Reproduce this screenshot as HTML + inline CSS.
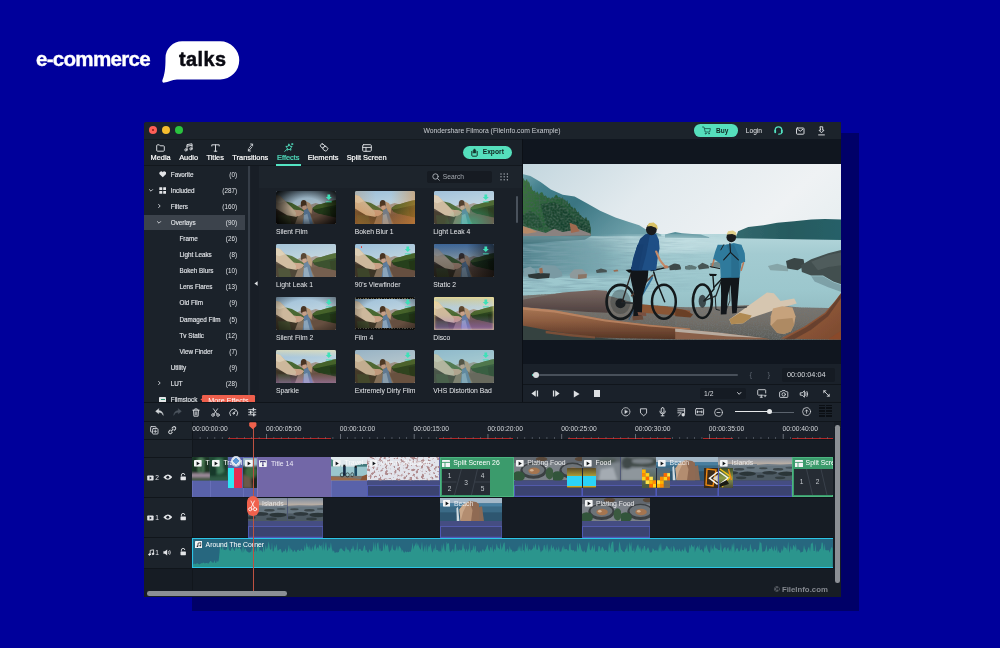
<!DOCTYPE html>
<html lang="en">
<head>
<meta charset="utf-8">
<title>e-commerce talks – Wondershare Filmora</title>
<style>
*{box-sizing:border-box;margin:0;padding:0}
html,body{width:1000px;height:648px;overflow:hidden}
body{background:#00009b;font-family:"Liberation Sans",sans-serif;position:relative;color:#e8eaed}
.abs,#w div,#w svg,#w span{position:absolute}
#logo-e{left:35.5px;top:47px;font-weight:bold;font-size:20.6px;letter-spacing:-0.75px;color:#fff;line-height:24px;white-space:nowrap;-webkit-text-stroke:0.35px #fff;will-change:transform}
#bubble{left:160px;top:36px;width:85px;height:52px}
#talks{left:178.8px;top:47px;font-weight:bold;font-size:19.8px;letter-spacing:0.5px;color:#0a0a12;line-height:24px;white-space:nowrap;-webkit-text-stroke:0.5px #0a0a12;will-change:transform}
#shadow{left:192px;top:133px;width:666.7px;height:477.6px;background:#000068}
#win{will-change:transform;left:144px;top:122px;width:697px;height:474.5px;background:#1a2028;overflow:hidden;border-radius:2.5px 1px 0 0}
#w{position:absolute;left:-144px;top:-122px;width:1000px;height:648px}
#w div,#w span{white-space:nowrap}
.tl{width:8px;height:8px;border-radius:50%;top:126.3px}
.tab{font-size:7.4px;color:#fff;text-align:center;transform:translateX(-50%);top:152.5px;line-height:10px;-webkit-text-stroke:0.2px #fff}
.tab.on{color:#53e3c2;-webkit-text-stroke:0.2px #53e3c2}
.ico{stroke:#d5d8dc;fill:none;stroke-width:1;stroke-linecap:round;stroke-linejoin:round;overflow:visible}
.sb{font-size:6.3px;color:#dfe2e6;line-height:10px;-webkit-text-stroke:0.15px #dfe2e6}
.sbc{font-size:6.3px;color:#dfe2e6;line-height:10px;text-align:right;width:30px;left:207px}
.lab{font-size:6.8px;color:#e6e8eb;line-height:10px}
.th{width:60px;height:32px;border-radius:1.5px;overflow:hidden;background:#555}
.tc{font-size:6.73px;color:#d4d7db;line-height:10px}
.clipt{font-size:6.85px;color:#fff;line-height:10px}
</style>
</head>
<body>
<div id="logo-e" class="abs">e-commerce</div>
<svg id="bubble" class="abs" viewBox="0 0 85 52"><path d="M22.1 5.3H60.2A19.05 19.05 0 0 1 60.2 43.4H17C12 43.4 8 46 4.5 46.6C2.5 46.9 1.8 45.5 2.6 43.5C4.5 39 5.5 33 5.5 22A16.6 16.6 0 0 1 22.1 5.3Z" fill="#fff"/></svg>
<div id="talks" class="abs">talks</div>
<div id="shadow" class="abs"></div>
<div id="win" class="abs"><div id="w">
<!-- TITLE BAR -->
<div style="left:144px;top:122px;width:698px;height:17px;background:#1c232b"></div>
<div class="tl" style="left:149px;background:#fe5f57"></div>
<div class="tl" style="left:162px;background:#f5bd2f"></div>
<div class="tl" style="left:175px;background:#2ac33f"></div>
<div style="left:151.8px;top:129.1px;width:2.4px;height:2.4px;border-radius:50%;background:#8c1a12"></div>
<div id="title" style="left:392px;width:200px;top:125.6px;line-height:10px;text-align:center;font-size:6.8px;color:#c9cdd2">Wondershare Filmora (FileInfo.com Example)</div>
<div style="left:694px;top:124.2px;width:44px;height:12.6px;border-radius:6.3px;background:#55dfbc"></div>
<svg class="ico" style="left:702px;top:126px;width:9px;height:9px;stroke:#1d5f52;stroke-width:0.9" viewBox="0 0 9 9"><path d="M0.5 1H2L3.2 6H7.6L8.4 2.6H2.5"/><circle cx="3.7" cy="7.6" r="0.5"/><circle cx="7" cy="7.6" r="0.5"/></svg>
<div style="left:716px;top:125.7px;font-size:6.5px;font-weight:bold;color:#10241f;line-height:10px">Buy</div>
<div style="left:745.7px;top:125.7px;font-size:6.7px;color:#e6e8eb;line-height:10px">Login</div>
<svg class="ico" style="left:774px;top:126px;width:9px;height:9px;stroke:#53e3c2;stroke-width:1.2" viewBox="0 0 9 9"><path d="M1.2 5V4.2A3.3 3.3 0 0 1 7.8 4.2V5"/><path d="M1.2 4.5V6.3M7.8 4.5V6.3" stroke-width="1.8"/><path d="M7.8 6.5C7.5 8 6 8.2 4.8 8.2"/></svg>
<svg class="ico" style="left:795.5px;top:126.5px;width:8.5px;height:8px" viewBox="0 0 8.5 8"><rect x="0.5" y="1" width="7.5" height="6.2" rx="0.8"/><path d="M1.8 2.4L4.25 4.2L6.7 2.4"/></svg>
<svg class="ico" style="left:817.5px;top:125.5px;width:7px;height:10px" viewBox="0 0 7 10"><path d="M2.3 0.8H4.7V4.2H6L3.5 6.8L1 4.2H2.3Z"/><path d="M0.6 8.9H6.4"/></svg>

<!-- TOOLBAR -->
<div style="left:144px;top:139px;width:378px;height:26.5px;background:#1a2129;border-top:1px solid #141a20;border-bottom:1px solid #12171d"></div>
<svg class="ico" style="left:156px;top:143.5px;width:9px;height:8px" viewBox="0 0 9 8"><path d="M0.7 1.6Q0.7 0.8 1.5 0.8H3.3L4.2 1.8H7.5Q8.3 1.8 8.3 2.6V6.4Q8.3 7.2 7.5 7.2H1.5Q0.7 7.2 0.7 6.4Z"/></svg>
<svg class="ico" style="left:184px;top:143px;width:9px;height:9px" viewBox="0 0 9 9"><path d="M3 6.8V1.6L8 0.8V5.8M3 3.2L8 2.4"/><circle cx="1.9" cy="6.9" r="1.1"/><circle cx="6.9" cy="5.9" r="1.1"/></svg>
<svg class="ico" style="left:210.5px;top:143.5px;width:9px;height:8px" viewBox="0 0 9 8"><path d="M0.8 2V0.8H8.2V2M4.5 0.8V7.2M3.2 7.2H5.8"/></svg>
<svg class="ico" style="left:245.8px;top:143px;width:9px;height:9px;stroke-width:0.9" viewBox="0 0 9 9"><path d="M3.4 4.6L6.4 1.2M4.6 1H6.6V3M5.6 4.4L2.6 7.8M4.4 8H2.4V6"/></svg>
<svg class="ico" style="left:283.5px;top:143px;width:10px;height:9px;stroke:#53e3c2;stroke-width:0.9" viewBox="0 0 10 9"><path d="M5 1.2L6 3.2L8.2 3.5L6.6 5L7 7.2L5 6.2L3 7.2L3.4 5L1.8 3.5L4 3.2Z"/><path d="M2.6 6.6L0.8 8.4M8.2 0.6V1.6M9 1.1H7.6"/></svg>
<svg class="ico" style="left:318.5px;top:143px;width:10px;height:9px;stroke-width:0.9" viewBox="0 0 10 9"><rect x="1.4" y="1.2" width="4.2" height="3.4" rx="1.2" transform="rotate(35 3.5 2.9)"/><rect x="4" y="3.6" width="4.6" height="4" rx="1.2" transform="rotate(35 6.3 5.6)"/></svg>
<svg class="ico" style="left:361.5px;top:143.5px;width:10px;height:8px" viewBox="0 0 10 8"><rect x="0.7" y="0.7" width="8.6" height="6.6" rx="0.9"/><path d="M0.7 3.4H9.3M4 3.4V7.3"/></svg>
<div class="tab" style="left:160.6px">Media</div>
<div class="tab" style="left:188.6px">Audio</div>
<div class="tab" style="left:215.2px">Titles</div>
<div class="tab" style="left:250.3px">Transitions</div>
<div class="tab on" style="left:288.3px">Effects</div>
<div class="tab" style="left:323.1px">Elements</div>
<div class="tab" style="left:366.6px">Split Screen</div>
<div style="left:276px;top:163.7px;width:25px;height:2.2px;background:#53e3c2"></div>
<div style="left:462.8px;top:145.5px;width:49.4px;height:13.4px;border-radius:6.7px;background:#55dfbc"></div>
<svg class="ico" style="left:470.5px;top:147.5px;width:7px;height:9px;stroke:#16332c;stroke-width:1" viewBox="0 0 7 9"><path d="M0.8 3.4V7.4Q0.8 8.2 1.6 8.2H5.4Q6.2 8.2 6.2 7.4V3.4"/><path d="M2.2 3.2V2.2L3.5 0.8L4.8 2.2V3.2V5H2.2Z" fill="#16332c" stroke-width="0.5"/></svg>
<div style="left:482.7px;top:147.3px;font-size:6.7px;font-weight:bold;color:#10241f;line-height:10px">Export</div>

<!-- SIDEBAR -->
<div style="left:144px;top:165.5px;width:104px;height:236px;background:#1b222a"></div>
<div style="left:144px;top:214.6px;width:101.3px;height:15.9px;background:#3c434c"></div>
<div style="left:247.6px;top:165.5px;width:2.9px;height:236px;background:#363e48"></div>
<div style="left:250.5px;top:165.5px;width:8px;height:236px;background:#181e26"></div>
<svg style="left:253.5px;top:281px;width:4px;height:5px" viewBox="0 0 4 5"><path d="M3.6 0.3V4.7L0.4 2.5Z" fill="#e0e2e5"/></svg>
<svg style="left:158.5px;top:171px;width:7.5px;height:6.5px" viewBox="0 0 7.5 6.5"><path d="M3.75 6.2L0.6 3.2A1.75 1.75 0 0 1 3.75 1.3A1.75 1.75 0 0 1 6.9 3.2Z" fill="#e3e5e8"/></svg>
<svg style="left:158.5px;top:186.8px;width:7.5px;height:7px" viewBox="0 0 7.5 7"><g fill="#e3e5e8"><rect x="0.3" y="0.2" width="3" height="2.9" rx="0.4"/><rect x="4.2" y="0.2" width="3" height="2.9" rx="0.4"/><rect x="0.3" y="3.9" width="3" height="2.9" rx="0.4"/><rect x="4.2" y="3.9" width="3" height="2.9" rx="0.4"/></g></svg>
<svg class="ico" style="left:148.5px;top:188.6px;width:4px;height:3px;stroke-width:0.9" viewBox="0 0 4 3"><path d="M0.4 0.6L2 2.2L3.6 0.6"/></svg>
<svg class="ico" style="left:157.8px;top:204.4px;width:3px;height:4px;stroke-width:0.9" viewBox="0 0 3 4"><path d="M0.6 0.4L2.2 2L0.6 3.6"/></svg>
<svg class="ico" style="left:157.2px;top:220.9px;width:4px;height:3px;stroke-width:0.9" viewBox="0 0 4 3"><path d="M0.4 0.6L2 2.2L3.6 0.6"/></svg>
<svg class="ico" style="left:157.8px;top:381.4px;width:3px;height:4px;stroke-width:0.9" viewBox="0 0 3 4"><path d="M0.6 0.4L2.2 2L0.6 3.6"/></svg>
<div class="sb" style="left:170.8px;top:169.6px">Favorite</div><div class="sbc" style="top:169.6px">(0)</div>
<div class="sb" style="left:170.8px;top:185.7px">Included</div><div class="sbc" style="top:185.7px">(287)</div>
<div class="sb" style="left:170.8px;top:201.8px">Filters</div><div class="sbc" style="top:201.8px">(160)</div>
<div class="sb" style="left:170.8px;top:217.9px">Overlays</div><div class="sbc" style="top:217.9px">(90)</div>
<div class="sb" style="left:179.5px;top:234px">Frame</div><div class="sbc" style="top:234px">(26)</div>
<div class="sb" style="left:179.5px;top:250.1px">Light Leaks</div><div class="sbc" style="top:250.1px">(8)</div>
<div class="sb" style="left:179.5px;top:266.2px">Bokeh Blurs</div><div class="sbc" style="top:266.2px">(10)</div>
<div class="sb" style="left:179.5px;top:282.3px">Lens Flares</div><div class="sbc" style="top:282.3px">(13)</div>
<div class="sb" style="left:179.5px;top:298.4px">Old Film</div><div class="sbc" style="top:298.4px">(9)</div>
<div class="sb" style="left:179.5px;top:314.5px">Damaged Film</div><div class="sbc" style="top:314.5px">(5)</div>
<div class="sb" style="left:179.5px;top:330.6px">Tv Static</div><div class="sbc" style="top:330.6px">(12)</div>
<div class="sb" style="left:179.5px;top:346.7px">View Finder</div><div class="sbc" style="top:346.7px">(7)</div>
<div class="sb" style="left:170.8px;top:362.8px">Utility</div><div class="sbc" style="top:362.8px">(9)</div>
<div class="sb" style="left:170.8px;top:378.9px">LUT</div><div class="sbc" style="top:378.9px">(28)</div>
<div style="left:159px;top:396.5px;width:6.5px;height:6px;background:#e3e5e8;border-radius:0.8px"></div>
<div style="left:160.5px;top:399px;width:4px;height:1.4px;background:#2e9a74"></div>
<div class="sb" style="left:170.8px;top:395px">Filmstock</div>
<svg style="left:199.5px;top:397px;width:4px;height:5px" viewBox="0 0 4 5"><path d="M4 0V5L0.3 2.5Z" fill="#ee5f4c"/></svg>
<div style="left:202.3px;top:395px;width:52.3px;height:10px;background:#ee5f4c;border-radius:1.2px"></div>
<div style="left:202.3px;top:396.4px;width:52.3px;text-align:center;font-size:7.2px;color:#fff;line-height:10px">More Effects</div>

<!-- EFFECTS GRID PANEL -->
<div style="left:258.5px;top:165.5px;width:263.5px;height:22px;background:#1d242c"></div>
<div style="left:258.5px;top:187.5px;width:263.5px;height:214px;background:#1a2028"></div>
<div style="left:426.8px;top:170.6px;width:65px;height:12.6px;border-radius:2px;background:#161b22"></div>
<svg class="ico" style="left:431.5px;top:173.4px;width:8px;height:8px;stroke:#aeb3ba;stroke-width:0.9" viewBox="0 0 8 8"><circle cx="3.5" cy="3.5" r="2.7"/><path d="M5.5 5.5L7.3 7.3"/></svg>
<div style="left:442.8px;top:172px;font-size:6.7px;color:#a4a9b0;line-height:10px">Search</div>
<svg style="left:500px;top:173px;width:8.4px;height:7.6px" viewBox="0 0 8.4 7.6"><g fill="#9ea3aa"><circle cx="1" cy="0.9" r="0.75"/><circle cx="4.2" cy="0.9" r="0.75"/><circle cx="7.4" cy="0.9" r="0.75"/><circle cx="1" cy="3.8" r="0.75"/><circle cx="4.2" cy="3.8" r="0.75"/><circle cx="7.4" cy="3.8" r="0.75"/><circle cx="1" cy="6.7" r="0.75"/><circle cx="4.2" cy="6.7" r="0.75"/><circle cx="7.4" cy="6.7" r="0.75"/></g></svg>
<div style="left:516px;top:196px;width:2px;height:27px;border-radius:1px;background:#4a525c"></div>

<!-- PREVIEW PANEL -->
<div style="left:521.8px;top:139px;width:320px;height:225px;background:#10161f"></div>
<div style="left:521.8px;top:139px;width:1px;height:263px;background:#0c1016"></div>
<div style="left:522.8px;top:363.8px;width:319px;height:20.6px;background:#1a212a"></div>
<div style="left:522.8px;top:384.4px;width:319px;height:17px;background:#1a212a;border-top:1px solid #10151b"></div>
<div style="left:532px;top:374.3px;width:206px;height:1.6px;border-radius:1px;background:#48505a"></div>
<div style="left:531.5px;top:374.1px;width:4px;height:2px;background:#53e3c2;border-radius:1px"></div>
<div style="left:533px;top:372.1px;width:6px;height:6px;border-radius:50%;background:#d8dbde"></div>
<div style="left:749.5px;top:369.6px;font-size:8px;color:#59616b;line-height:10px">{</div>
<div style="left:767.5px;top:369.6px;font-size:8px;color:#59616b;line-height:10px">}</div>
<div style="left:782px;top:368px;width:53px;height:14px;border-radius:2px;background:#151b23"></div>
<div style="left:787px;top:370.2px;font-size:7.3px;color:#d7dade;line-height:10px">00:00:04:04</div>
<svg style="left:530.5px;top:390px;width:8px;height:7px" viewBox="0 0 8 7"><path d="M4.8 0.3V6.7L0.4 3.5Z" fill="#dcdfe2"/><rect x="5.8" y="0.5" width="1.3" height="6" fill="#dcdfe2"/></svg>
<svg style="left:551.5px;top:390px;width:8px;height:7px" viewBox="0 0 8 7"><path d="M3.2 0.3V6.7L7.6 3.5Z" fill="#dcdfe2"/><rect x="0.9" y="0.5" width="1.3" height="6" fill="#dcdfe2"/></svg>
<svg style="left:573px;top:389.6px;width:7px;height:8px" viewBox="0 0 7 8"><path d="M0.8 0.4V7.6L6.6 4Z" fill="#dcdfe2"/></svg>
<div style="left:593.8px;top:390.4px;width:6.2px;height:6.2px;background:#dcdfe2"></div>
<div style="left:700px;top:388.4px;width:46px;height:10.4px;border-radius:2px;background:#151b23"></div>
<div style="left:704px;top:388.6px;font-size:6.8px;color:#d7dade;line-height:10px">1/2</div>
<svg class="ico" style="left:737.3px;top:392px;width:4.4px;height:3px;stroke-width:0.9" viewBox="0 0 4.4 3"><path d="M0.5 0.5L2.2 2.3L3.9 0.5"/></svg>
<svg class="ico" style="left:756.5px;top:389.3px;width:10px;height:9px;stroke-width:0.9" viewBox="0 0 10 9"><path d="M6 6.2H1.4Q0.7 6.2 0.7 5.5V1.4Q0.7 0.7 1.4 0.7H8Q8.7 0.7 8.7 1.4V4"/><path d="M3.2 8.2H5.4M4.3 6.2V8.2"/><path d="M7 6.2H9.4L8.2 7.8Z" fill="#d5d8dc" stroke-width="0.4"/></svg>
<svg class="ico" style="left:779px;top:389.6px;width:9.4px;height:8px;stroke-width:0.9" viewBox="0 0 9.4 8"><path d="M0.6 2.4Q0.6 1.7 1.3 1.7H2.6L3.3 0.6H6.1L6.8 1.7H8.1Q8.8 1.7 8.8 2.4V6.7Q8.8 7.4 8.1 7.4H1.3Q0.6 7.4 0.6 6.7Z"/><circle cx="4.7" cy="4.4" r="1.7"/></svg>
<svg class="ico" style="left:799.5px;top:389.6px;width:9px;height:8px;stroke-width:0.9" viewBox="0 0 9 8"><path d="M0.6 2.8H2.2L4.4 0.8V7.2L2.2 5.2H0.6Z"/><path d="M5.8 2.6Q6.6 4 5.8 5.4M7 1.5Q8.6 4 7 6.5"/></svg>
<svg class="ico" style="left:822.5px;top:390.3px;width:7px;height:7px;stroke-width:0.9" viewBox="0 0 7 7"><path d="M0.8 0.8L6.2 6.2M0.8 2.8V0.8H2.8M6.2 4.2V6.2H4.2"/></svg>
<!-- EFFECT THUMBNAILS -->
<svg style="left:0;top:0;width:0;height:0" aria-hidden="true"><defs>
<filter id="tb" x="-5%" y="-5%" width="110%" height="110%"><feGaussianBlur stdDeviation="9"/></filter>
<linearGradient id="tsky" x1="0" y1="0" x2="0.3" y2="1"><stop offset="0" stop-color="#98bcd8"/><stop offset="0.45" stop-color="#b4cede"/><stop offset="1" stop-color="#dde4e6"/></linearGradient>
<linearGradient id="tgr" x1="0" y1="0" x2="1" y2="0"><stop offset="0" stop-color="#4c4034"/><stop offset="0.45" stop-color="#786252"/><stop offset="0.7" stop-color="#685044"/><stop offset="1" stop-color="#4a3a30"/></linearGradient>
<symbol id="vine" viewBox="72 55 858 470" preserveAspectRatio="none">
<rect x="40" y="30" width="920" height="520" fill="url(#tsky)"/>
<g filter="url(#tb)">
<rect x="40" y="300" width="920" height="260" fill="url(#tgr)"/>
<polygon points="380,270 470,235 560,250 640,225 720,250 720,300 380,300" fill="#a39890"/>
<polygon points="150,200 230,210 300,225 400,285 470,330 470,400 300,380 150,300" fill="#4a6830"/>
<polygon points="40,330 250,380 460,400 420,560 40,560" fill="#3e3628"/>
<polygon points="100,400 260,400 300,560 120,560" fill="#3f4a2a" opacity="0.8"/>
<polygon points="590,300 650,255 720,240 800,215 880,195 960,180 960,440 860,425 760,400 680,380 620,350" fill="#263f1c"/>
<polygon points="590,300 650,255 720,240 800,215 880,195 960,180 960,250 860,270 760,290 680,310 620,320" fill="#5a7a34" opacity="0.6"/>
<polygon points="840,300 960,280 960,440 860,425" fill="#1f3418" opacity="0.8"/>
<polygon points="570,390 700,385 960,440 960,560 640,560" fill="#66503f"/>
<polygon points="390,400 470,380 560,400 640,560 330,560" fill="#84705c"/>
</g>
<g filter="url(#tb)">
<polygon points="40,100 72,112 130,128 250,245 330,322 430,335 475,360 430,398 350,422 230,402 72,305 40,290" fill="#cdb89c"/>
<polygon points="40,100 72,112 130,128 200,200 120,230 40,200" fill="#dccdb4"/>
<polygon points="330,322 430,335 475,360 430,398 350,422 360,370" fill="#c9a085"/>
<polygon points="470,330 540,300 565,400 605,540 450,540 468,420" fill="#5d7c9c"/>
<polygon points="470,400 520,380 560,540 470,540" fill="#a9bfd0" opacity="0.6"/>
<polygon points="500,200 560,230 590,300 580,380 540,340 520,280" fill="#b89878"/>
<ellipse cx="468" cy="240" rx="42" ry="55" fill="#4a3424"/>
<polygon points="450,270 500,260 510,310 470,330 445,305" fill="#c8a088"/>
</g>
</symbol>
<symbol id="dl" viewBox="0 0 10 12"><path d="M3.2 0.6H6.8V4H9L5 8L1 4H3.2Z" fill="#3fe0b8"/><rect x="1.2" y="9.6" width="7.6" height="1.3" fill="#3fe0b8" opacity="0.85"/></symbol>
</defs></svg>
<div class="th" style="left:276.3px;top:191px;height:32.9px"><svg style="left:0;top:0;width:60px;height:32.9px"><use href="#vine" width="60" height="32.9"/></svg><div style="inset:0;background:radial-gradient(ellipse 72% 85% at 52% 52%,rgba(0,0,0,0) 36%,rgba(0,0,0,0.7) 74%,rgba(0,0,0,1) 96%)"></div><div style="inset:0;background:rgba(0,0,0,0.12)"></div><svg style="left:48.7px;top:2.6px;width:7.6px;height:9.2px"><use href="#dl" width="7.6" height="9.2"/></svg></div>
<div class="lab" style="left:276px;top:227px">Silent Film</div>
<div class="th" style="left:355px;top:191px;height:32.9px"><svg style="left:0;top:0;width:60px;height:32.9px"><use href="#vine" width="60" height="32.9"/></svg><div style="inset:0;background:linear-gradient(180deg,rgba(255,200,140,0) 30%,rgba(205,120,45,0.42) 100%)"></div><div style="inset:0;background:linear-gradient(90deg,rgba(210,130,50,0.25) 0,rgba(210,130,50,0) 35%,rgba(210,130,50,0) 60%,rgba(215,135,50,0.5) 100%)"></div></div>
<div class="lab" style="left:354.7px;top:227px">Bokeh Blur 1</div>
<div class="th" style="left:433.6px;top:191px;height:32.9px"><svg style="left:0;top:0;width:60px;height:32.9px"><use href="#vine" width="60" height="32.9"/></svg><div style="inset:0;background:radial-gradient(ellipse 45% 60% at 62% 100%,rgba(30,190,140,0.6) 0,rgba(30,190,140,0) 100%)"></div><div style="inset:0;background:rgba(255,255,255,0.06)"></div><svg style="left:48.7px;top:2.6px;width:7.6px;height:9.2px"><use href="#dl" width="7.6" height="9.2"/></svg></div>
<div class="lab" style="left:433.3px;top:227px">Light Leak 4</div>
<div class="th" style="left:276.3px;top:243.9px;height:32.9px"><svg style="left:0;top:0;width:60px;height:32.9px"><use href="#vine" width="60" height="32.9"/></svg><div style="inset:0;background:rgba(255,245,220,0.10)"></div></div>
<div class="lab" style="left:276px;top:279.9px">Light Leak 1</div>
<div class="th" style="left:355px;top:243.9px;height:32.9px"><svg style="left:0;top:0;width:60px;height:32.9px"><use href="#vine" width="60" height="32.9"/></svg><div style="left:5.5px;top:2.6px;width:1.6px;height:1.6px;border-radius:50%;background:#e83a3a"></div><svg style="left:48.7px;top:2.6px;width:7.6px;height:9.2px"><use href="#dl" width="7.6" height="9.2"/></svg></div>
<div class="lab" style="left:354.7px;top:279.9px">90's Viewfinder</div>
<div class="th" style="left:433.6px;top:243.9px;height:32.9px"><svg style="left:0;top:0;width:60px;height:32.9px"><use href="#vine" width="60" height="32.9"/></svg><div style="inset:0;background:linear-gradient(180deg,rgba(0,45,110,0.62) 0,rgba(0,15,40,0.35) 42%,rgba(0,0,0,0.45) 100%)"></div><div style="inset:0;background:linear-gradient(90deg,rgba(0,0,0,0) 55%,rgba(0,0,0,0.6) 100%)"></div><svg style="left:48.7px;top:2.6px;width:7.6px;height:9.2px"><use href="#dl" width="7.6" height="9.2"/></svg></div>
<div class="lab" style="left:433.3px;top:279.9px">Static 2</div>
<div class="th" style="left:276.3px;top:296.9px;height:32.9px"><svg style="left:0;top:0;width:60px;height:32.9px"><use href="#vine" width="60" height="32.9"/></svg><div style="inset:0;background:radial-gradient(ellipse 70% 75% at 50% 50%,rgba(0,0,0,0) 55%,rgba(0,0,0,0.45) 100%)"></div><svg style="left:48.7px;top:2.6px;width:7.6px;height:9.2px"><use href="#dl" width="7.6" height="9.2"/></svg></div>
<div class="lab" style="left:276px;top:332.9px">Silent Film 2</div>
<div class="th" style="left:355px;top:296.9px;height:32.9px"><svg style="left:0;top:0;width:60px;height:32.9px"><use href="#vine" width="60" height="32.9"/></svg><div style="inset:0;background:radial-gradient(ellipse 75% 85% at 50% 50%,rgba(0,0,0,0) 50%,rgba(0,0,0,0.55) 100%)"></div><div style="left:0;top:0;width:60px;height:2.4px;background:#0d0d0d"></div><div style="left:0;top:30.7px;width:60px;height:2.2px;background:#0d0d0d"></div><div style="left:0;top:0.7px;width:60px;height:1px;background:repeating-linear-gradient(90deg,#6a6448 0 1.2px,transparent 1.2px 2.6px)"></div><div style="left:0;top:31.4px;width:60px;height:0.9px;background:repeating-linear-gradient(90deg,#4a4a40 0 1.2px,transparent 1.2px 2.6px)"></div><svg style="left:48.7px;top:2.6px;width:7.6px;height:9.2px"><use href="#dl" width="7.6" height="9.2"/></svg></div>
<div class="lab" style="left:354.7px;top:332.9px">Film 4</div>
<div class="th" style="left:433.6px;top:296.9px;height:32.9px"><svg style="left:0;top:0;width:60px;height:32.9px"><use href="#vine" width="60" height="32.9"/></svg><div style="inset:0;background:linear-gradient(180deg,rgba(250,215,100,0.55) 0,rgba(255,220,150,0.12) 30%,rgba(255,220,150,0) 55%,rgba(160,110,225,0.55) 100%)"></div><div style="inset:0;box-shadow:inset 0 0 2.5px 0.8px rgba(250,225,150,0.7)"></div><svg style="left:48.7px;top:2.6px;width:7.6px;height:9.2px"><use href="#dl" width="7.6" height="9.2"/></svg></div>
<div class="lab" style="left:433.3px;top:332.9px">Disco</div>
<div class="th" style="left:276.3px;top:349.8px;height:32.9px"><svg style="left:0;top:0;width:60px;height:32.9px"><use href="#vine" width="60" height="32.9"/></svg><div style="inset:0;background:linear-gradient(180deg,rgba(255,235,170,0.55) 0,rgba(255,235,170,0) 22%,rgba(0,0,0,0) 70%,rgba(190,140,220,0.45) 100%)"></div><svg style="left:48.7px;top:2.6px;width:7.6px;height:9.2px"><use href="#dl" width="7.6" height="9.2"/></svg></div>
<div class="lab" style="left:276px;top:385.8px">Sparkle</div>
<div class="th" style="left:355px;top:349.8px;height:32.9px"><svg style="left:0;top:0;width:60px;height:32.9px"><use href="#vine" width="60" height="32.9"/></svg><div style="inset:0;background:rgba(120,100,60,0.12)"></div><svg style="left:48.7px;top:2.6px;width:7.6px;height:9.2px"><use href="#dl" width="7.6" height="9.2"/></svg></div>
<div class="lab" style="left:354.7px;top:385.8px">Extremely Dirty Film</div>
<div class="th" style="left:433.6px;top:349.8px;height:32.9px"><svg style="left:0;top:0;width:60px;height:32.9px"><use href="#vine" width="60" height="32.9"/></svg><div style="inset:0;background:rgba(60,150,140,0.22)"></div><div style="inset:0;background:rgba(255,255,255,0.07)"></div><svg style="left:48.7px;top:2.6px;width:7.6px;height:9.2px"><use href="#dl" width="7.6" height="9.2"/></svg></div>
<div class="lab" style="left:433.3px;top:385.8px">VHS Distortion Bad</div>
<!-- VIDEO PREVIEW -->
<svg style="left:522.8px;top:164.2px;width:318.2px;height:176.2px" viewBox="0 0 318.2 176.2" preserveAspectRatio="none">
<defs>
<linearGradient id="vsky" x1="0" y1="0" x2="1" y2="0.6"><stop offset="0" stop-color="#c3d6de"/><stop offset="0.35" stop-color="#e2eaee"/><stop offset="0.7" stop-color="#eff2f4"/><stop offset="1" stop-color="#e3ecee"/></linearGradient>
<linearGradient id="vwat" x1="0" y1="0" x2="0" y2="1"><stop offset="0" stop-color="#b4d6db"/><stop offset="0.25" stop-color="#a3cbd1"/><stop offset="0.7" stop-color="#9cc7cd"/><stop offset="1" stop-color="#93bcc2"/></linearGradient>
<linearGradient id="vwl" x1="0" y1="0" x2="1" y2="0"><stop offset="0" stop-color="#4a7a85" stop-opacity="0.95"/><stop offset="0.55" stop-color="#5f929c" stop-opacity="0.6"/><stop offset="1" stop-color="#9cc7cd" stop-opacity="0"/></linearGradient>
<linearGradient id="vmt" x1="0" y1="0" x2="1" y2="0.5"><stop offset="0" stop-color="#6fa2ac"/><stop offset="0.2" stop-color="#44808d"/><stop offset="0.5" stop-color="#3a7582"/><stop offset="1" stop-color="#6d9fa9"/></linearGradient>
<linearGradient id="vhill" x1="0" y1="0" x2="1" y2="0"><stop offset="0" stop-color="#33696e"/><stop offset="0.5" stop-color="#265a5f"/><stop offset="1" stop-color="#266068"/></linearGradient>
<linearGradient id="vtree" x1="0" y1="0" x2="1" y2="0.3"><stop offset="0" stop-color="#3f7a3c"/><stop offset="0.4" stop-color="#2a6438"/><stop offset="1" stop-color="#1d4a34"/></linearGradient>
<linearGradient id="vsand" x1="0" y1="0" x2="0" y2="1"><stop offset="0" stop-color="#7c7872"/><stop offset="0.5" stop-color="#726d66"/><stop offset="1" stop-color="#585c58"/></linearGradient>
<linearGradient id="vlog" x1="0" y1="0" x2="0" y2="1"><stop offset="0" stop-color="#aa7856"/><stop offset="0.45" stop-color="#8c5c40"/><stop offset="1" stop-color="#553424"/></linearGradient>
<linearGradient id="vlog2" x1="0" y1="0" x2="0" y2="1"><stop offset="0" stop-color="#7a6862"/><stop offset="1" stop-color="#4f4140"/></linearGradient>
<linearGradient id="vlogr" x1="0" y1="0" x2="1" y2="1"><stop offset="0" stop-color="#5a3a2a"/><stop offset="0.35" stop-color="#94593a"/><stop offset="1" stop-color="#7a4a30"/></linearGradient>
<filter id="vrip" x="0" y="0" width="100%" height="100%"><feTurbulence type="fractalNoise" baseFrequency="0.04 0.55" numOctaves="2" seed="8"/><feColorMatrix values="0 0 0 0 0.2  0 0 0 0 0.36  0 0 0 0 0.42  0 3.2 0 0 -1.25"/></filter>
<linearGradient id="vripg" x1="0" y1="0" x2="1" y2="0"><stop offset="0" stop-color="#fff" stop-opacity="1"/><stop offset="0.55" stop-color="#fff" stop-opacity="0.55"/><stop offset="1" stop-color="#fff" stop-opacity="0"/></linearGradient>
<linearGradient id="vripg2" x1="0" y1="0" x2="0" y2="1"><stop offset="0" stop-color="#000"/><stop offset="0.1" stop-color="#fff"/><stop offset="0.7" stop-color="#fff"/><stop offset="1" stop-color="#000"/></linearGradient>
<mask id="vripm" maskUnits="userSpaceOnUse" x="0" y="72" width="200" height="60"><rect x="0" y="72" width="200" height="60" fill="url(#vripg)"/></mask>
<filter id="vtex" x="0" y="0" width="100%" height="100%"><feTurbulence type="fractalNoise" baseFrequency="0.5" numOctaves="2" seed="3"/><feColorMatrix values="0 0 0 0 0.05  0 0 0 0 0.12  0 0 0 0 0.08  0 2.5 0 0 -0.9"/></filter>
<filter id="vtex2" x="0" y="0" width="100%" height="100%"><feTurbulence type="fractalNoise" baseFrequency="0.75" numOctaves="2" seed="11"/><feColorMatrix values="0 0 0 0 0.16  0 0 0 0 0.17  0 0 0 0 0.17  0 2.6 0 0 -1.0"/></filter>
<filter id="vb1" x="-5%" y="-5%" width="110%" height="110%"><feGaussianBlur stdDeviation="0.7"/></filter>
<filter id="vb2" x="-5%" y="-5%" width="110%" height="110%"><feGaussianBlur stdDeviation="0.35"/></filter>
<filter id="vb3" x="-5%" y="-5%" width="110%" height="110%"><feGaussianBlur stdDeviation="2.5"/></filter>
</defs>
<rect width="318.2" height="176.2" fill="url(#vsky)"/>
<rect y="70" width="318.2" height="80" fill="url(#vwat)"/>
<g filter="url(#vb1)">
<polygon points="-2.8,9.4 0.3,10.2 7.4,12 17.6,17.9 27.8,25.6 39.7,30.7 51.6,32.4 65.2,40 77.1,46.8 92.4,53.6 106,57.9 116.2,61.2 123,65.5 138.3,70.6 138.3,72.3 -2.8,72.3" fill="url(#vmt)" />
<polygon points="152.2,68.1 159,69.2 169.2,69.9 177.7,70.6 186.2,73.2 186.2,74 142,73.7 142,70.6" fill="#5a919b" />
<polygon points="212.6,73.7 215.1,67.2 225.3,62.9 240.6,61.2 254.2,58.7 271.2,57.3 288.2,55.6 301.8,55 318.8,55.6 318.8,76 212.6,74.3" fill="url(#vhill)" />
</g>
<ellipse cx="140" cy="80" rx="75" ry="9" fill="#cfe6e9" opacity="0.55" filter="url(#vb3)"/>
<rect x="-10" y="74" width="160" height="38" fill="url(#vwl)" filter="url(#vb3)"/>
<g filter="url(#vb2)">
<polygon points="-2.8,14.2 -1.3,16.7 0.3,14.2 2.1,17.3 4,14.9 4.9,19.1 5.7,17.3 6.6,19.3 7.4,23.4 8.2,21.6 9.1,25.5 10.4,27.3 11.7,26.4 12.9,29.4 14.2,27.2 15.9,30.8 17.6,28.6 19.3,28.2 21,31.9 22.7,31.5 24.4,34.1 26.1,33.6 27.6,35.1 29.2,33.2 30.7,34.1 32.2,31.4 33.8,30.8 35.2,33.5 36.7,33.2 38.2,34.3 39.7,33.5 40.8,35.9 42,35.6 43.1,38.1 44.2,36.1 45.4,40.4 46.5,38.8 47.9,42.7 49.2,42.8 50.6,45.1 51.9,43.4 53.3,46.4 54.4,48.6 55.6,47.4 56.7,50.9 57.8,51 59,53.1 60.1,53.6 61.6,55.1 63.1,52.9 64.6,56.8 66.1,56.4 66.5,59.4 66.9,59.8 67.3,62.8 67.8,63.8 67.8,71.4 -2.8,71.4" fill="url(#vtree)" />
<clipPath id="vtc"><polygon points="-2.8,14.2 -1.3,16.7 0.3,14.2 2.1,17.3 4,14.9 4.9,19.1 5.7,17.3 6.6,19.3 7.4,23.4 8.2,21.6 9.1,25.5 10.4,27.3 11.7,26.4 12.9,29.4 14.2,27.2 15.9,30.8 17.6,28.6 19.3,28.2 21,31.9 22.7,31.5 24.4,34.1 26.1,33.6 27.6,35.1 29.2,33.2 30.7,34.1 32.2,31.4 33.8,30.8 35.2,33.5 36.7,33.2 38.2,34.3 39.7,33.5 40.8,35.9 42,35.6 43.1,38.1 44.2,36.1 45.4,40.4 46.5,38.8 47.9,42.7 49.2,42.8 50.6,45.1 51.9,43.4 53.3,46.4 54.4,48.6 55.6,47.4 56.7,50.9 57.8,51 59,53.1 60.1,53.6 61.6,55.1 63.1,52.9 64.6,56.8 66.1,56.4 66.5,59.4 66.9,59.8 67.3,62.8 67.8,63.8 67.8,71.4 -2.8,71.4"/></clipPath>
<polygon points="17.6,40 31.2,38.3 41.4,43.4 48.2,51.9 56.7,58.7 66.9,63.8 67.2,68.9 31.2,68.9 22.7,60.4" fill="#173d2c" opacity="0.75"/>
<polygon points="-2.8,51.9 7.4,46.8 15.9,53.6 21,63.8 7.4,63.8 -2.8,60.4" fill="#1c4530" opacity="0.7"/>
<g clip-path="url(#vtc)"><rect x="0" y="8" width="72" height="66" filter="url(#vtex)"/></g>
<polygon points="-2.8,61.2 10.8,65.5 22.7,68.9 31.2,64.7 39.7,68.1 48.2,66.4 55,64.7 67.8,69.8 67.8,71.8 -2.8,72.3" fill="#8a8280" />
<polygon points="-2.8,61.2 7.4,64.7 14.2,68.1 4,69.8 -2.8,68.9" fill="#b58a68" />
<polygon points="46.5,58.7 53.3,61.2 56.7,67.2 48.2,68.9" fill="#a06a50" />
</g>
<g mask="url(#vripm)"><rect x="0" y="72" width="200" height="56" filter="url(#vrip)" opacity="0.7"/></g>
<polygon points="-2.8,72.3 68.6,71.8 61.8,75.7 31.2,77.4 -2.8,80.8" fill="#3f6f78" opacity="0.55" filter="url(#vb1)"/>
<g filter="url(#vb2)">
<polygon points="-2.8,131.8 39.7,129.2 85.6,131.8 116.2,140.3 167.2,143.7 167.2,176 -2.8,176" fill="url(#vsand)" />
<polygon points="152.2,143.7 203.2,142.3 240.6,140.3 278,143.4 305.2,144 322.2,142 322.2,176 152.2,176" fill="url(#vsand)" />
<clipPath id="vsc"><polygon points="-2.8,131.8 39.7,129.2 85.6,131.8 116.2,140.3 167.2,143.7 167.2,176 -2.8,176"/><polygon points="152.2,143.7 203.2,142.3 240.6,140.3 278,143.4 305.2,144 322.2,142 322.2,176 152.2,176"/></clipPath>
<g clip-path="url(#vsc)"><rect x="0" y="128" width="318.2" height="50" filter="url(#vtex2)" opacity="0.8"/></g>
<polygon points="-2.8,160.7 31.2,165.8 73.7,173.4 99.2,176 -2.8,176" fill="#364240" />
<polygon points="0.6,104.6 7.4,102.6 12.5,106.3 11.7,112.8 0.6,112.2" fill="#7f9fa8" />
<polygon points="13.4,106.3 19.3,100.9 32.1,101.5 38.9,108 39.4,112.2 31.2,114.5 15.9,113.1" fill="#7a9aa3" />
<polygon points="4.9,110.6 15.9,108.9 27,109.4 26.1,113.9 14.2,115.1 5.7,113.4" fill="#2e3838" />
<polygon points="16.2,104.6 19.3,103.8 20,108.9 16.8,109.4" fill="#9a6a50" />
<polygon points="46.5,110.6 50.8,105.4 59.2,104.9 64.4,110 63.5,113.9 55,115.1 47.4,113.9" fill="#8e9a9c" />
<polygon points="55,110.6 63.8,110 63.5,113.9 55,115.1" fill="#8a6a58" opacity="0.8"/>
<polygon points="72.9,106.3 78,104.6 83.6,106 83.9,108.3 73.7,108.9" fill="#465252" />
<polygon points="90.4,106.3 94.4,105.4 95.5,107.2 91,107.7" fill="#9a6a50" />
<polygon points="146,102.1 151.1,99.5 157,101.5 157.9,105.4 146.8,106.3" fill="#3e4a4a" />
<polygon points="162.1,102.6 167.2,100.9 167.2,105.4 162.4,104.9" fill="#465252" />
<polygon points="129,103.8 138.3,101.2 141.7,104.6 129.8,106" fill="#7fa0a5" />
<polygon points="152.2,99.5 156.5,100.4 158.2,104.6 152.2,106.3" fill="#3e4a4a" />
<polygon points="162.1,102.6 168.4,100.9 174,102.9 172.6,105.6 162.7,105.4" fill="#5f7878" />
<polygon points="174.6,102.1 179.4,98.8 185.4,101.2 186.2,104.3 176,105.6" fill="#465555" />
<polygon points="187.1,99.5 194.7,97.5 199.8,99.2 199,103.8 187.9,103.8" fill="#6f8a8c" />
<polygon points="244.9,102.1 254.2,99.8 264.4,102.6 265.2,107.2 247.4,106.3" fill="#86a5a8" />
<polygon points="263,96.9 271.2,94.1 280.6,95.2 281.7,102.1 274.6,106.3 264.4,104.6" fill="#3a4646" />
<polygon points="278,101.2 288.2,95.2 305.2,89.3 318,85.9 319.7,85.9 319.7,120.8 310.3,117.4 300.1,111.4 288.2,111.4 278.9,108" fill="#434f4f" />
<polygon points="288.2,97.8 305.2,91 318,88.5 318,101.2 305.2,102.9 295,106.3" fill="#566363" opacity="0.7"/>
<polygon points="288.2,112.2 300.1,112.2 310.3,118.2 319.7,121.6 319.7,128.4 305.2,123.3 291.6,117.4" fill="#6f9097" opacity="0.7"/>
<polygon points="-2.8,136.1 39.7,128.4 72,126 83.9,126.7 85.6,131.8 84.8,148.8 65.2,148.1 31.2,145.4 -2.8,142.9" fill="url(#vlog2)" />
<polygon points="116.2,140.3 141.7,142.3 167.2,146.8 167.2,152.5 141.7,150.5 116.2,148.5" fill="#8a5636" />
<polygon points="152.2,144.6 162.4,146.2 170.1,150.5 167.5,153.6 152.2,152.2" fill="#6a3f28" />
<polygon points="-2.8,142.9 31.2,146.2 82.2,155.6 126.4,160.7 167.2,164.4 167.2,175.3 116.2,174.6 72,173.4 31.2,167.5 -2.8,161" fill="url(#vlog)" />
<polygon points="-2.8,142.9 31.2,146.2 82.2,155.6 126.4,160.7 167.2,164.4 167.2,165.8 126.4,162.4 82.2,157.6 31.2,148.5 -2.8,145.4" fill="#c08a66" opacity="0.8"/>
<polygon points="152.2,164.4 194.7,168.4 240.6,174 247.4,175.3 152.2,175.3" fill="#8a6048" />
<polygon points="152.2,164.4 194.7,168.4 240.6,174 203.2,172.3 152.2,167.8" fill="#b8aca0" />
<polygon points="22.7,166.7 48.2,170.1 72,172.6 72,174.6 48.2,172.6 22.7,169.2" fill="#7a5038" />
<polygon points="206.3,155.6 220.2,145.4 232.1,136.9 244,128.4 250.8,129.2 257.6,136.9 271.2,134.4 273.8,139.4 257.6,144 240.6,149.7 227,154.2 220.2,159.3 208.3,160.2" fill="#d6c6b0" />
<polygon points="206.3,155.6 216.8,148.8 228.7,151.4 227,154.2 220.2,159.3 208.3,160.2" fill="#b08a52" />
<polygon points="250,144.6 259.3,142.3 269.5,143.4 272.6,152.2 271.2,160.7 267.8,167.5 261,170.1 254.2,168.9 247.4,160.7 247.7,152.2" fill="#c6a27c" />
<polygon points="254.2,155.6 269.5,153.9 271.2,160.7 267.8,167.5 261,170.1 254.2,168.9 248.2,161.6" fill="#a8855e" opacity="0.8"/>
<polygon points="319.7,126.7 312,136.9 301.8,148.8 281.4,162.4 257.6,174.6 319.7,175.7" fill="url(#vlogr)" />
<polygon points="319.7,131.8 305.2,152.2 288.2,165.8 271.2,175.3 261,175.3 283.1,163.2 302.7,149.7 319.7,127.6" fill="#5a3a2c" opacity="0.7"/>
<polygon points="319.7,165.8 305.2,175.3 319.7,175.3" fill="#8a4a2a" />
</g>
<g>
<ellipse cx="97.5" cy="137.8" rx="13.9" ry="17" fill="none" stroke="#14191b" stroke-width="2.7"/>
<ellipse cx="97.5" cy="137.8" rx="10.2" ry="12.2" fill="#2a3032" opacity="0.35"/>
<ellipse cx="140.9" cy="137.8" rx="11.9" ry="17" fill="none" stroke="#14191b" stroke-width="2.5"/>
<ellipse cx="97.5" cy="139.4" rx="5.1" ry="4.8" fill="#1a1f22" />
<polyline points="99.2,137.8 108.6,108" fill="none" stroke="#2a2422" stroke-width="1.3" stroke-linecap="round" stroke-linejoin="round" />
<polyline points="108.6,131.8 129.8,111.4" fill="none" stroke="#5a4034" stroke-width="1.6" stroke-linecap="round" stroke-linejoin="round" />
<polyline points="114.5,138.6 129,113.9" fill="none" stroke="#2f6f9a" stroke-width="2" stroke-linecap="round" stroke-linejoin="round" />
<polyline points="98.4,138.6 114.5,139.4" fill="none" stroke="#20262a" stroke-width="1.4" stroke-linecap="round" stroke-linejoin="round" />
<polyline points="130.7,108 133.2,116.5 141.7,137.8" fill="none" stroke="#14191b" stroke-width="1.5" stroke-linecap="round" stroke-linejoin="round" />
<polyline points="128.1,106.6 138.3,104.6 145.1,102.9" fill="none" stroke="#14191b" stroke-width="1.4" stroke-linecap="round" stroke-linejoin="round" />
<polygon points="102.6,106 109.4,105.1 114.8,106.3 114.2,108.3 106,108.7" fill="#101416" />
<polyline points="114.5,139.4 106,155.6" fill="none" stroke="#3a5a78" stroke-width="1.2" stroke-linecap="round" stroke-linejoin="round" />
<polygon points="108,102.9 125.6,103.8 124.7,114.8 119.6,131.8 118.8,152.2 110.2,153.1 111.4,131.8 107.7,114.8" fill="#12161a" />
<polygon points="109.4,152.2 119.6,151.4 120.5,155.6 109.7,156.4" fill="#6a4a3a" />
<polygon points="114.5,147.9 123,148.8 123.3,151.9 115.4,151.4" fill="#7a5040" />
</g>
<polygon points="122.2,70.6 126.4,68.9 133.2,69.9 135.8,75.7 136.6,84.2 135.2,91 134.2,97.8 133.2,106.3 108.6,106.3 110.8,94.4 113.7,84.2 117.1,74.9" fill="#1e4f86" />
<polygon points="114.5,80.8 131.5,80.8 133.2,87.6 131.5,97.8 129.8,106.6 108,106 110.2,94.4" fill="#1e4f86" />
<polygon points="122.2,70.6 127.2,69.2 123,91 118.8,106.3 108.6,106.3 110.8,94.4 113.7,84.2 117.1,74.9" fill="#173f70" opacity="0.8"/>
<polygon points="114.5,80.8 120.5,80.8 117.1,97.8 115.4,106.3 108,106 110.2,94.4" fill="#173f70" opacity="0.8"/>
<polyline points="133.2,87.6 136.9,96.1 142,102.6" fill="none" stroke="#c58a68" stroke-width="2.2" stroke-linecap="round" stroke-linejoin="round" />
<ellipse cx="143.1" cy="102.9" rx="2.4" ry="1.7" fill="#b87a5a" />
<ellipse cx="128.4" cy="65.5" rx="5.4" ry="5.8" fill="#1a1c1e" />
<polygon points="123.9,62.4 126.1,59 130.7,58.4 134.1,61.2 134.9,65.5 132.4,63.5 128.1,62.1" fill="#d9c266" />
<ellipse cx="179.4" cy="137.2" rx="9.5" ry="16.7" fill="none" stroke="#14191b" stroke-width="2.5"/>
<ellipse cx="179.4" cy="137.2" rx="3.7" ry="6.5" fill="#252b2e" opacity="0.8"/>
<polyline points="189.9,111.4 191,125 181.1,136.9" fill="none" stroke="#14191b" stroke-width="1.4" stroke-linecap="round" stroke-linejoin="round" />
<polyline points="191,123.3 199,114.8" fill="none" stroke="#14191b" stroke-width="1.5" stroke-linecap="round" stroke-linejoin="round" />
<polyline points="181.1,136.9 193,131.8 198.1,117.4" fill="none" stroke="#1e2426" stroke-width="1.3" stroke-linecap="round" stroke-linejoin="round" />
<polyline points="192.2,131.8 193,145.4 196.4,146.2" fill="none" stroke="#1e2426" stroke-width="1" stroke-linecap="round" stroke-linejoin="round" />
<polygon points="185.9,109.7 193.9,110 193,112.1 187.1,111.9" fill="#101416" />
<polyline points="206.6,119.9 206.9,136.9 203.2,146.2" fill="none" stroke="#3a4042" stroke-width="1" stroke-linecap="round" stroke-linejoin="round" />
<polyline points="213.4,143.4 223.6,143" fill="none" stroke="#14191b" stroke-width="0.9" stroke-linecap="round" stroke-linejoin="round" />
<polygon points="197.8,113.1 216.5,112.4 215.1,131.8 213.7,149.1 209.2,149.5 207.6,120.8 204.9,131.8 203.5,150.2 197.8,150.5 198.1,131.8" fill="#12161a" />
<polygon points="203.2,80.8 210.9,79.1 217.7,80.8 221.1,87.6 222.2,95.8 191.3,95.8 194.7,87.6" fill="#2f7a9c" />
<polygon points="194.7,80.8 218.5,80.8 221.6,89.3 222.2,97.8 218.5,99.2 216.5,113.4 197.8,114.1 197.1,99.5 193,96.4 189.9,95.8 192.2,87.6" fill="#2f7a9c" />
<polygon points="203.2,80.8 210.9,80.8 215.4,91 216.5,113.4 208.3,113.8 208.3,91" fill="#266a8a" opacity="0.7"/>
<polyline points="206.9,79.4 207.5,88.4 200.7,95.8" fill="none" stroke="#15191c" stroke-width="1.1" stroke-linecap="round" stroke-linejoin="round" />
<polyline points="207.5,88.4 215.4,95.8" fill="none" stroke="#15191c" stroke-width="1.1" stroke-linecap="round" stroke-linejoin="round" />
<polyline points="200.7,80.8 197.8,85.9" fill="none" stroke="#15191c" stroke-width="0.9" stroke-linecap="round" stroke-linejoin="round" />
<polyline points="191,95.8 189.3,102.1" fill="none" stroke="#b87a5a" stroke-width="1.6" stroke-linecap="round" stroke-linejoin="round" />
<polyline points="220.5,98.7 218.2,106.3" fill="none" stroke="#b87a5a" stroke-width="1.6" stroke-linecap="round" stroke-linejoin="round" />
<polyline points="187.1,102.6 196.7,104.6" fill="none" stroke="#14191b" stroke-width="1" stroke-linecap="round" stroke-linejoin="round" />
<ellipse cx="208.3" cy="73.2" rx="4.8" ry="5.1" fill="#1a1c1e" />
<polygon points="203.5,70.6 205.2,67.2 210,66.4 213.1,68.6 213.4,71.6 209.2,69.9" fill="#e0cf8a" />
</svg>
<!-- TIMELINE -->
<div style="left:144px;top:401.5px;width:698px;height:20px;background:#1b222b;border-top:1px solid #0f141a;border-bottom:1px solid #10151b"></div>
<div style="left:144px;top:421.5px;width:698px;height:176px;background:#161c24"></div>
<div style="left:144px;top:421.5px;width:47.8px;height:146.8px;background:#1c232b"></div>
<div style="left:191.8px;top:421.5px;width:642px;height:18px;background:#1a2029"></div>
<div style="left:144px;top:439px;width:690px;height:1px;background:#10151b"></div>
<div style="left:191.5px;top:421.5px;width:0.8px;height:169px;background:#11161c"></div>
<div style="left:144px;top:457.2px;width:690px;height:1px;background:#10151b"></div>
<div style="left:144px;top:497.2px;width:690px;height:1px;background:#10151b"></div>
<div style="left:144px;top:537.4px;width:690px;height:1px;background:#10151b"></div>
<div style="left:144px;top:567.8px;width:690px;height:1px;background:#10151b"></div>
<div style="left:144px;top:590px;width:698px;height:7px;background:#171d25"></div>
<svg class="ico" style="left:155.3px;top:408.2px;width:9px;height:8px;" viewBox="0 0 9 8"><path d="M3.7 0.8L0.6 3.3L3.7 5.8V4.3C5.8 4.2 7.2 5.1 8.3 7.4C8.1 4.4 6.5 2.5 3.7 2.4Z" fill="#d5d8dc" stroke-width="0.4"/></svg>
<svg class="ico" style="left:172.8px;top:408.2px;width:9px;height:8px;stroke:#4d555f" viewBox="0 0 9 8"><path d="M5.3 0.8L8.4 3.3L5.3 5.8V4.3C3.2 4.2 1.8 5.1 0.7 7.4C0.9 4.4 2.5 2.5 5.3 2.4Z" fill="#4d555f" stroke-width="0.4"/></svg>
<svg class="ico" style="left:192.2px;top:408px;width:8px;height:9px;stroke-width:0.9" viewBox="0 0 8 9"><path d="M0.8 2.2H7.2M2.8 2.2V0.9H5.2V2.2M1.5 2.2L1.9 8.2H6.1L6.5 2.2M3.2 3.8V6.8M4.8 3.8V6.8"/></svg>
<svg class="ico" style="left:210.6px;top:408px;width:9px;height:9px;stroke-width:0.9" viewBox="0 0 9 9"><circle cx="2" cy="7" r="1.3"/><circle cx="7" cy="7" r="1.3"/><path d="M2.9 6L6.6 0.8M6.1 6L2.4 0.8"/></svg>
<svg class="ico" style="left:229px;top:408px;width:9.4px;height:9px;stroke-width:0.9" viewBox="0 0 9.4 9"><path d="M1.5 7.6A4 4 0 1 1 7.9 7.6"/><path d="M4.7 5.2L6.6 2.8"/><circle cx="4.7" cy="5.4" r="0.8"/></svg>
<svg class="ico" style="left:248.3px;top:408.3px;width:8.4px;height:8.4px;" viewBox="0 0 8.4 8.4"><path d="M0.6 1.6H7.8M0.6 4.2H7.8M0.6 6.8H7.8" stroke-width="0.9"/><path d="M5.4 0.6V2.6M2.6 3.2V5.2M5.8 5.8V7.8" stroke-width="1.5"/></svg>
<svg class="ico" style="left:620.5px;top:407.2px;width:9.6px;height:9.6px;stroke-width:0.8" viewBox="0 0 9.6 9.6"><circle cx="4.8" cy="4.8" r="4.1" stroke-dasharray="1.4 0.7"/><path d="M3.8 2.9V6.7L6.8 4.8Z" fill="#d5d8dc" stroke-width="0.3"/></svg>
<svg class="ico" style="left:640px;top:407.6px;width:7.4px;height:8.6px;stroke-width:0.9" viewBox="0 0 7.4 8.6"><path d="M0.8 0.8H6.6V5.2L3.7 7.8L0.8 5.2Z"/></svg>
<svg class="ico" style="left:658.8px;top:407.2px;width:7.2px;height:9.4px;stroke-width:0.9" viewBox="0 0 7.2 9.4"><rect x="2.2" y="0.6" width="2.8" height="5" rx="1.4"/><path d="M0.8 4.2Q0.8 6.9 3.6 6.9Q6.4 6.9 6.4 4.2M3.6 6.9V8.8M2.2 8.8H5"/></svg>
<svg class="ico" style="left:677.2px;top:407.6px;width:9px;height:9px;" viewBox="0 0 9 9"><path d="M0.8 0.8H7.6M0.8 2.8H7.6M0.8 4.8H4.2M7.6 0.8V5.4" stroke-width="0.9"/><circle cx="6.2" cy="6.8" r="1.7" fill="#d5d8dc" stroke="none"/><path d="M3.6 5.6L1.6 8" stroke-width="0.9"/></svg>
<svg class="ico" style="left:695.2px;top:408.3px;width:9.2px;height:7.6px;stroke-width:0.9" viewBox="0 0 9.2 7.6"><rect x="0.6" y="0.6" width="8" height="6.4" rx="0.9"/><path d="M2.4 3V4.6M6.8 3V4.6" stroke-width="1.2"/><path d="M3.6 3.8H5.6" stroke-width="0.9"/></svg>
<svg class="ico" style="left:713.8px;top:407.6px;width:9px;height:9px;stroke-width:0.8" viewBox="0 0 9 9"><circle cx="4.5" cy="4.5" r="3.9"/><path d="M3 4.5H6"/></svg>
<div style="left:734.5px;top:411.3px;width:35.5px;height:1.1px;background:#e6e8ea"></div>
<div style="left:770px;top:411.5px;width:24px;height:0.8px;background:#5b636d"></div>
<div style="left:767.3px;top:409.3px;width:5.2px;height:5.2px;border-radius:50%;background:#e6e8ea"></div>
<svg class="ico" style="left:802.4px;top:407.4px;width:9.2px;height:9.2px;stroke-width:0.8" viewBox="0 0 9.2 9.2"><circle cx="4.6" cy="4.6" r="4"/><path d="M4.6 3V6.2M3.4 4.2L4.6 3L5.8 4.2" stroke-width="0.8"/></svg>
<div style="left:819.4px;top:405px;width:6px;height:13.4px;background:repeating-linear-gradient(180deg,#0b0f14 0 1.1px,#1b222b 1.1px 1.6px)"></div>
<div style="left:826.4px;top:405px;width:6px;height:13.4px;background:repeating-linear-gradient(180deg,#0b0f14 0 1.1px,#1b222b 1.1px 1.6px)"></div>
<svg class="ico" style="left:149.6px;top:425.8px;width:8.6px;height:8.6px;stroke-width:0.9" viewBox="0 0 8.6 8.6"><rect x="0.6" y="0.6" width="5.4" height="5.4" rx="0.7"/><rect x="2.6" y="2.6" width="5.4" height="5.4" rx="0.7" fill="#1b222b"/><path d="M5.3 4V6.6M4 5.3H6.6" stroke-width="0.8"/></svg>
<svg class="ico" style="left:167.4px;top:425.4px;width:10.4px;height:10.4px;stroke-width:0.85" viewBox="0 0 8.6 8.6"><path d="M3.5 5.1L5.1 3.5M4.2 2.6L5.2 1.6A1.3 1.3 0 0 1 7 3.4L6 4.4M4.4 6L3.4 7A1.3 1.3 0 0 1 1.6 5.2L2.6 4.2"/></svg>
<div class="tc" style="left:192.2px;top:424.2px">00:00:00:00</div>
<div class="tc" style="left:266px;top:424.2px">00:00:05:00</div>
<div class="tc" style="left:339.8px;top:424.2px">00:00:10:00</div>
<div class="tc" style="left:413.6px;top:424.2px">00:00:15:00</div>
<div class="tc" style="left:487.4px;top:424.2px">00:00:20:00</div>
<div class="tc" style="left:561.2px;top:424.2px">00:00:25:00</div>
<div class="tc" style="left:635px;top:424.2px">00:00:30:00</div>
<div class="tc" style="left:708.8px;top:424.2px">00:00:35:00</div>
<div class="tc" style="left:782.6px;top:424.2px">00:00:40:00</div>
<div style="left:228px;top:437.9px;width:103px;height:0.9px;background:#b32727"></div>
<div style="left:439px;top:437.9px;width:74px;height:0.9px;background:#b32727"></div>
<div style="left:567.8px;top:437.9px;width:103.2px;height:0.9px;background:#b32727"></div>
<div style="left:703px;top:437.9px;width:30px;height:0.9px;background:#b32727"></div>
<div style="left:792px;top:437.9px;width:41px;height:0.9px;background:#b32727"></div>
<svg style="left:192px;top:434px;width:642px;height:5px" viewBox="0 0 642 5"><rect x="7.78" y="3" width="0.6" height="2" fill="#6a717b"/><rect x="15.16" y="3" width="0.6" height="2" fill="#6a717b"/><rect x="22.54" y="3" width="0.6" height="2" fill="#6a717b"/><rect x="29.92" y="3" width="0.6" height="2" fill="#6a717b"/><rect x="37.3" y="3" width="0.6" height="2" fill="#6a717b"/><rect x="44.68" y="3" width="0.6" height="2" fill="#6a717b"/><rect x="52.06" y="3" width="0.6" height="2" fill="#6a717b"/><rect x="59.44" y="3" width="0.6" height="2" fill="#6a717b"/><rect x="66.82" y="3" width="0.6" height="2" fill="#6a717b"/><rect x="74.2" y="0" width="0.7" height="5" fill="#868c96"/><rect x="81.58" y="3" width="0.6" height="2" fill="#6a717b"/><rect x="88.96" y="3" width="0.6" height="2" fill="#6a717b"/><rect x="96.34" y="3" width="0.6" height="2" fill="#6a717b"/><rect x="103.72" y="3" width="0.6" height="2" fill="#6a717b"/><rect x="111.1" y="3" width="0.6" height="2" fill="#6a717b"/><rect x="118.48" y="3" width="0.6" height="2" fill="#6a717b"/><rect x="125.86" y="3" width="0.6" height="2" fill="#6a717b"/><rect x="133.24" y="3" width="0.6" height="2" fill="#6a717b"/><rect x="140.62" y="3" width="0.6" height="2" fill="#6a717b"/><rect x="148" y="0" width="0.7" height="5" fill="#868c96"/><rect x="155.38" y="3" width="0.6" height="2" fill="#6a717b"/><rect x="162.76" y="3" width="0.6" height="2" fill="#6a717b"/><rect x="170.14" y="3" width="0.6" height="2" fill="#6a717b"/><rect x="177.52" y="3" width="0.6" height="2" fill="#6a717b"/><rect x="184.9" y="3" width="0.6" height="2" fill="#6a717b"/><rect x="192.28" y="3" width="0.6" height="2" fill="#6a717b"/><rect x="199.66" y="3" width="0.6" height="2" fill="#6a717b"/><rect x="207.04" y="3" width="0.6" height="2" fill="#6a717b"/><rect x="214.42" y="3" width="0.6" height="2" fill="#6a717b"/><rect x="221.8" y="0" width="0.7" height="5" fill="#868c96"/><rect x="229.18" y="3" width="0.6" height="2" fill="#6a717b"/><rect x="236.56" y="3" width="0.6" height="2" fill="#6a717b"/><rect x="243.94" y="3" width="0.6" height="2" fill="#6a717b"/><rect x="251.32" y="3" width="0.6" height="2" fill="#6a717b"/><rect x="258.7" y="3" width="0.6" height="2" fill="#6a717b"/><rect x="266.08" y="3" width="0.6" height="2" fill="#6a717b"/><rect x="273.46" y="3" width="0.6" height="2" fill="#6a717b"/><rect x="280.84" y="3" width="0.6" height="2" fill="#6a717b"/><rect x="288.22" y="3" width="0.6" height="2" fill="#6a717b"/><rect x="295.6" y="0" width="0.7" height="5" fill="#868c96"/><rect x="302.98" y="3" width="0.6" height="2" fill="#6a717b"/><rect x="310.36" y="3" width="0.6" height="2" fill="#6a717b"/><rect x="317.74" y="3" width="0.6" height="2" fill="#6a717b"/><rect x="325.12" y="3" width="0.6" height="2" fill="#6a717b"/><rect x="332.5" y="3" width="0.6" height="2" fill="#6a717b"/><rect x="339.88" y="3" width="0.6" height="2" fill="#6a717b"/><rect x="347.26" y="3" width="0.6" height="2" fill="#6a717b"/><rect x="354.64" y="3" width="0.6" height="2" fill="#6a717b"/><rect x="362.02" y="3" width="0.6" height="2" fill="#6a717b"/><rect x="369.4" y="0" width="0.7" height="5" fill="#868c96"/><rect x="376.78" y="3" width="0.6" height="2" fill="#6a717b"/><rect x="384.16" y="3" width="0.6" height="2" fill="#6a717b"/><rect x="391.54" y="3" width="0.6" height="2" fill="#6a717b"/><rect x="398.92" y="3" width="0.6" height="2" fill="#6a717b"/><rect x="406.3" y="3" width="0.6" height="2" fill="#6a717b"/><rect x="413.68" y="3" width="0.6" height="2" fill="#6a717b"/><rect x="421.06" y="3" width="0.6" height="2" fill="#6a717b"/><rect x="428.44" y="3" width="0.6" height="2" fill="#6a717b"/><rect x="435.82" y="3" width="0.6" height="2" fill="#6a717b"/><rect x="443.2" y="0" width="0.7" height="5" fill="#868c96"/><rect x="450.58" y="3" width="0.6" height="2" fill="#6a717b"/><rect x="457.96" y="3" width="0.6" height="2" fill="#6a717b"/><rect x="465.34" y="3" width="0.6" height="2" fill="#6a717b"/><rect x="472.72" y="3" width="0.6" height="2" fill="#6a717b"/><rect x="480.1" y="3" width="0.6" height="2" fill="#6a717b"/><rect x="487.48" y="3" width="0.6" height="2" fill="#6a717b"/><rect x="494.86" y="3" width="0.6" height="2" fill="#6a717b"/><rect x="502.24" y="3" width="0.6" height="2" fill="#6a717b"/><rect x="509.62" y="3" width="0.6" height="2" fill="#6a717b"/><rect x="517" y="0" width="0.7" height="5" fill="#868c96"/><rect x="524.38" y="3" width="0.6" height="2" fill="#6a717b"/><rect x="531.76" y="3" width="0.6" height="2" fill="#6a717b"/><rect x="539.14" y="3" width="0.6" height="2" fill="#6a717b"/><rect x="546.52" y="3" width="0.6" height="2" fill="#6a717b"/><rect x="553.9" y="3" width="0.6" height="2" fill="#6a717b"/><rect x="561.28" y="3" width="0.6" height="2" fill="#6a717b"/><rect x="568.66" y="3" width="0.6" height="2" fill="#6a717b"/><rect x="576.04" y="3" width="0.6" height="2" fill="#6a717b"/><rect x="583.42" y="3" width="0.6" height="2" fill="#6a717b"/><rect x="590.8" y="0" width="0.7" height="5" fill="#868c96"/><rect x="598.18" y="3" width="0.6" height="2" fill="#6a717b"/><rect x="605.56" y="3" width="0.6" height="2" fill="#6a717b"/><rect x="612.94" y="3" width="0.6" height="2" fill="#6a717b"/><rect x="620.32" y="3" width="0.6" height="2" fill="#6a717b"/><rect x="627.7" y="3" width="0.6" height="2" fill="#6a717b"/><rect x="635.08" y="3" width="0.6" height="2" fill="#6a717b"/></svg>
<svg style="left:147.4px;top:474.6px;width:7px;height:6px" viewBox="0 0 7 6"><rect x="0.2" y="0.4" width="6.4" height="5.2" rx="0.8" fill="#e3e5e8"/><path d="M2.6 1.6V4.4L4.8 3Z" fill="#1b222b"/></svg>
<div style="left:155.2px;top:472.6px;font-size:6.6px;color:#e3e5e8;line-height:10px">2</div>
<svg style="left:162.6px;top:474.4px;width:9.6px;height:6.4px" viewBox="0 0 9.6 6.4"><path d="M0.3 3.2Q4.8 -2 9.3 3.2Q4.8 8.4 0.3 3.2Z" fill="#e3e5e8"/><circle cx="4.8" cy="3.2" r="1.5" fill="#1b222b"/></svg>
<svg style="left:179.6px;top:473.2px;width:6.4px;height:7.6px" viewBox="0 0 6.4 7.6"><path d="M1.4 3.4V2.2A1.7 1.7 0 0 1 4.8 2" stroke="#e3e5e8" stroke-width="0.9" fill="none"/><rect x="0.5" y="3.4" width="5.4" height="3.8" rx="0.6" fill="#e3e5e8"/></svg>
<svg style="left:147.4px;top:514.6px;width:7px;height:6px" viewBox="0 0 7 6"><rect x="0.2" y="0.4" width="6.4" height="5.2" rx="0.8" fill="#e3e5e8"/><path d="M2.6 1.6V4.4L4.8 3Z" fill="#1b222b"/></svg>
<div style="left:155.2px;top:512.6px;font-size:6.6px;color:#e3e5e8;line-height:10px">1</div>
<svg style="left:162.6px;top:514.4px;width:9.6px;height:6.4px" viewBox="0 0 9.6 6.4"><path d="M0.3 3.2Q4.8 -2 9.3 3.2Q4.8 8.4 0.3 3.2Z" fill="#e3e5e8"/><circle cx="4.8" cy="3.2" r="1.5" fill="#1b222b"/></svg>
<svg style="left:179.6px;top:513.2px;width:6.4px;height:7.6px" viewBox="0 0 6.4 7.6"><path d="M1.4 3.4V2.2A1.7 1.7 0 0 1 4.8 2" stroke="#e3e5e8" stroke-width="0.9" fill="none"/><rect x="0.5" y="3.4" width="5.4" height="3.8" rx="0.6" fill="#e3e5e8"/></svg>
<svg class="ico" style="left:147.6px;top:549.3px;width:6.4px;height:7px;stroke-width:0.9;stroke:#e3e5e8" viewBox="0 0 6.4 7"><path d="M2.2 5.4V1.4L5.6 0.8V4.8"/><circle cx="1.5" cy="5.5" r="0.8" fill="#e3e5e8"/><circle cx="4.9" cy="4.9" r="0.8" fill="#e3e5e8"/></svg>
<div style="left:155.2px;top:547.8px;font-size:6.6px;color:#e3e5e8;line-height:10px">1</div>
<svg style="left:163.2px;top:549.3px;width:8.4px;height:7px" viewBox="0 0 8.4 7"><path d="M0.4 2.3H1.9L4.2 0.4V6.6L1.9 4.7H0.4Z" fill="#e3e5e8"/><path d="M5.4 2.2Q6.2 3.5 5.4 4.8M6.6 1.2Q8.2 3.5 6.6 5.8" stroke="#e3e5e8" stroke-width="0.8" fill="none"/></svg>
<svg style="left:179.6px;top:548.4px;width:6.4px;height:7.6px" viewBox="0 0 6.4 7.6"><path d="M1.4 3.4V2.2A1.7 1.7 0 0 1 4.8 2" stroke="#e3e5e8" stroke-width="0.9" fill="none"/><rect x="0.5" y="3.4" width="5.4" height="3.8" rx="0.6" fill="#e3e5e8"/></svg>
<!-- CLIPS -->
<svg style="left:0;top:0;width:0;height:0" aria-hidden="true"><defs>
<filter id="cb" x="-5%" y="-5%" width="110%" height="110%"><feGaussianBlur stdDeviation="0.5"/></filter>
<filter id="cb2" x="-5%" y="-5%" width="110%" height="110%"><feGaussianBlur stdDeviation="1.2"/></filter>
<filter id="spk" x="0" y="0" width="100%" height="100%"><feTurbulence type="fractalNoise" baseFrequency="0.33" numOctaves="2" seed="4"/><feColorMatrix values="0 0 0 0 0.42  0 0 0 0 0.25  0 0 0 0 0.26  0 7 0 0 -3.7"/><feGaussianBlur stdDeviation="0.3"/></filter>
<linearGradient id="isky" x1="0" y1="0" x2="0" y2="1"><stop offset="0" stop-color="#7d8b9c"/><stop offset="0.6" stop-color="#a9a6a6"/><stop offset="1" stop-color="#c6b4a2"/></linearGradient>
<symbol id="forest" viewBox="0 0 18 23" preserveAspectRatio="none"><rect width="18" height="23" fill="#1d3a2a"/><g filter="url(#cb2)"><ellipse cx="9" cy="8" rx="5" ry="8" fill="#4f8058"/><ellipse cx="3" cy="10" rx="3" ry="9" fill="#173020"/><ellipse cx="15" cy="9" rx="3" ry="9" fill="#1a3524"/><rect x="-2" y="16" width="22" height="4.5" fill="#9d8a9a"/><rect x="-2" y="20" width="22" height="5" fill="#4a5a4a"/><rect x="8" y="6" width="2" height="9" fill="#2a3a30"/></g></symbol>
<symbol id="forest2" viewBox="0 0 18 23" preserveAspectRatio="none"><rect width="18" height="23" fill="#1f4a34"/><g filter="url(#cb2)"><ellipse cx="9" cy="9" rx="7" ry="8" fill="#3f7a5a"/><ellipse cx="3" cy="14" rx="4" ry="7" fill="#17382a"/><ellipse cx="16" cy="6" rx="3" ry="8" fill="#1a3a2a"/><rect x="-2" y="19" width="22" height="6" fill="#2f5a44"/></g></symbol>
<symbol id="hand" viewBox="0 0 14 30" preserveAspectRatio="none"><rect width="14" height="30" fill="#24382a"/><g filter="url(#cb2)"><rect x="-1" y="-1" width="16" height="9" fill="#9ab8c8"/><ellipse cx="8" cy="14" rx="6" ry="6" fill="#3f6a40"/><polygon points="0,16 8,20 10,30 0,30" fill="#6a5a48"/><polygon points="8,22 14,18 14,30 9,30" fill="#1a241c"/></g></symbol>
<symbol id="travel" viewBox="0 0 36 23" preserveAspectRatio="none"><rect width="36" height="23" fill="#dfe8ec"/><g filter="url(#cb)"><polygon points="0,2 4,4 10,8 10,9.5 0,9.5" fill="#4f8a82"/><polygon points="24,8.5 30,7 36,7 36,10 24,10" fill="#3f7a7c"/><rect y="9.5" width="36" height="10" fill="#9ac6cd"/><rect y="18.6" width="36" height="5" fill="#7a756e"/><polygon points="0,19.4 20,20.6 36,22.6 36,23 0,23" fill="#9a6a48"/><polygon points="31,19 36,17 36,23 29,23" fill="#8a5536"/><rect x="12" y="9" width="2.6" height="9.5" fill="#142a44"/><rect x="12.2" y="7.6" width="2" height="2" fill="#1a1c1e"/><rect x="23.2" y="10" width="2.6" height="8.6" fill="#1f4a64"/><rect x="23.5" y="8.6" width="2" height="2" fill="#1a1c1e"/><ellipse cx="11" cy="17.6" rx="1.8" ry="2" fill="none" stroke="#14191b" stroke-width="0.6"/><ellipse cx="16.4" cy="17.6" rx="1.8" ry="2" fill="none" stroke="#14191b" stroke-width="0.6"/><ellipse cx="21" cy="17.4" rx="1.3" ry="2" fill="none" stroke="#14191b" stroke-width="0.6"/></g></symbol>
<symbol id="blossom" viewBox="0 0 72 23" preserveAspectRatio="none"><rect width="72" height="23" fill="#e6ebf2"/><rect width="72" height="23" filter="url(#spk)"/><rect width="72" height="23" fill="#c8a8b0" opacity="0.10"/></symbol>
<symbol id="food" viewBox="0 0 34 23" preserveAspectRatio="none"><rect width="34" height="23" fill="#7b8188"/><g filter="url(#cb)"><rect width="34" height="6" fill="#62686f"/><ellipse cx="17" cy="13.5" rx="11.5" ry="8" fill="#3a3f43"/><ellipse cx="17" cy="12.6" rx="9.6" ry="5.8" fill="#6d7378"/><ellipse cx="17.5" cy="13.6" rx="5" ry="3.2" fill="#a5744f"/><ellipse cx="15.5" cy="13" rx="1.6" ry="1.2" fill="#d0b090"/><ellipse cx="4" cy="19" rx="5.5" ry="5" fill="#33543a"/><ellipse cx="31" cy="16" rx="3.5" ry="6" fill="#3a5a40"/><ellipse cx="24" cy="2" rx="5" ry="2.2" fill="#5a4a3a"/></g></symbol>
<symbol id="food2" viewBox="0 0 37 23" preserveAspectRatio="none"><rect width="37" height="23" fill="#5f676e"/><g filter="url(#cb2)"><polygon points="14,8 37,5 37,23 10,23" fill="#7d858c"/><polygon points="18,12 30,10 34,23 16,23" fill="#a4abb2"/><ellipse cx="8" cy="14" rx="5" ry="3" fill="#4a5258"/><ellipse cx="24" cy="3" rx="9" ry="3.5" fill="#4a5650"/><rect x="0" y="0" width="37" height="3" fill="#5a6268" opacity="0.7"/></g></symbol>
<symbol id="food3" viewBox="0 0 37 23" preserveAspectRatio="none"><rect width="37" height="23" fill="#6a7278"/><g filter="url(#cb2)"><ellipse cx="20" cy="5" rx="16" ry="5" fill="#3f4a46"/><ellipse cx="20" cy="4" rx="11" ry="2.6" fill="#7a8288"/><polygon points="0,12 20,10 37,16 37,23 0,23" fill="#8e969c"/><ellipse cx="6" cy="6" rx="5" ry="6" fill="#3f4a48"/></g></symbol>
<symbol id="beach" viewBox="0 0 39 23" preserveAspectRatio="none"><rect width="39" height="23" fill="#3b6a86"/><g filter="url(#cb)"><rect width="39" height="5.2" fill="#a4b8c8"/><rect y="5.2" width="39" height="3" fill="#4a7fa0"/><rect y="14" width="39" height="9" fill="#2d566f"/><polygon points="16.4,10 18,8.5 19.5,23 16.8,23" fill="#d0dce2"/><polygon points="19.5,11 23,6.5 29,3.2 36,4 39,6 39,23 20.5,23" fill="#b38d70"/><polygon points="29,3.2 36,4 39,6 39,23 31,23 32.5,12" fill="#8f6a52"/><polygon points="19.5,11 23,6.5 26,8 23,14 20.5,23" fill="#caa88a"/></g></symbol>
<symbol id="sea" viewBox="0 0 39 23" preserveAspectRatio="none"><rect width="39" height="23" fill="#3b6a86"/><g filter="url(#cb)"><rect width="39" height="5.2" fill="#a4b8c8"/><rect y="5.2" width="39" height="3" fill="#4a7fa0"/><rect y="14" width="39" height="9" fill="#2d566f"/><polygon points="0,9 3,8 5,23 0,23" fill="#8a6a54"/></g></symbol>
<symbol id="islands" viewBox="0 0 37 23" preserveAspectRatio="none"><rect width="37" height="23" fill="#66757f"/><g filter="url(#cb)"><rect width="37" height="8" fill="url(#isky)"/><polygon points="0,7.6 10,7 22,7.4 37,6.8 37,8.6 0,8.6" fill="#6f7c88"/><rect y="15" width="37" height="8" fill="#4d5a64"/><ellipse cx="6" cy="11" rx="4" ry="1" fill="#3f4a4e"/><ellipse cx="20" cy="12" rx="5" ry="1.2" fill="#3a4448"/><ellipse cx="31" cy="10.6" rx="4" ry="0.9" fill="#46525a"/><ellipse cx="12" cy="15.5" rx="7" ry="1.8" fill="#2f393c"/><ellipse cx="28" cy="16.5" rx="8" ry="2.2" fill="#2c3638"/><ellipse cx="3" cy="19" rx="4" ry="1.5" fill="#2f393c"/><ellipse cx="22" cy="20.5" rx="5" ry="1.4" fill="#333d40"/></g></symbol>
<symbol id="pl" viewBox="0 0 7.8 6.8"><rect width="7.8" height="6.8" rx="0.7" fill="#f4f5f6"/><path d="M2.6 1.4V5.4L5.8 3.4Z" fill="#14181c"/></symbol>
</defs></svg>
<div style="left:191.9px;top:457.2px;width:17.9px;height:39.9px;background:#5962aa;overflow:hidden;box-shadow:inset 0.8px 0 0 #6b74bc;">
<svg style="left:0px;top:0;width:17.9px;height:23.4px"><use href="#forest" width="17.9" height="23.4"/></svg>
<svg style="left:2.4px;top:2.8px;width:7.8px;height:6.8px"><use href="#pl" width="7.8" height="6.8"/></svg>
<div class="clipt" style="left:13.6px;top:1.3px;opacity:1">Travel</div>
</div>
<div style="left:209.8px;top:457.2px;width:32.8px;height:39.9px;background:#5962aa;overflow:hidden;box-shadow:inset 0.8px 0 0 #6b74bc;">
<svg style="left:0px;top:0;width:17.8px;height:23.4px"><use href="#forest2" width="17.8" height="23.4"/></svg>
<svg style="left:2.4px;top:2.8px;width:7.8px;height:6.8px"><use href="#pl" width="7.8" height="6.8"/></svg>
<div class="clipt" style="left:13.6px;top:1.3px;opacity:1">Travel</div>
</div>
<div style="left:242.6px;top:457.2px;width:14.3px;height:39.9px;background:#5962aa;overflow:hidden;box-shadow:inset 0.8px 0 0 #6b74bc;">
<svg style="left:2.4px;top:2.8px;width:7.8px;height:6.8px"><use href="#pl" width="7.8" height="6.8"/></svg>
<div class="clipt" style="left:13.6px;top:1.3px;opacity:1"></div>
</div>
<div style="left:230.6px;top:456.4px;width:10.4px;height:10.4px;border-radius:50%;background:radial-gradient(circle at 50% 45%,#5a9ad8 0 35%,#e8eef4 36% 60%,#b8c8d8 61% 100%);opacity:0.9"></div>
<div style="left:227.9px;top:467.5px;width:6px;height:20.3px;background:#2fe6f4"></div>
<div style="left:233.9px;top:467.5px;width:8.4px;height:20.3px;background:#e32e52"></div>
<svg style="left:242.8px;top:457.6px;width:14.1px;height:30.2px"><use href="#hand" width="14.1" height="30.2"/></svg>
<svg style="left:245px;top:460.4px;width:7.8px;height:6.8px"><use href="#pl" width="7.8" height="6.8"/></svg>
<div style="left:256.9px;top:457.2px;width:74.1px;height:39.9px;background:#7267a7;box-shadow:inset 0.8px 0 0 #8a7fc0"></div>
<svg style="left:259.4px;top:460.2px;width:7.8px;height:7px" viewBox="0 0 7.8 7"><rect width="7.8" height="7" rx="0.7" fill="#f4f5f6"/><path d="M1.6 2.4V1.4H6.2V2.4M3.9 1.4V5.6M3 5.6H4.8" stroke="#4a4280" stroke-width="1.1" fill="none"/></svg>
<div class="clipt" style="left:271px;top:458.6px;color:#eceaf6">Title 14</div>
<div style="left:331px;top:457.2px;width:36.3px;height:39.9px;background:#5962aa;overflow:hidden;box-shadow:inset 0.8px 0 0 #6b74bc;">
<svg style="left:0px;top:0;width:36.3px;height:23.4px"><use href="#travel" width="36.3" height="23.4"/></svg>
<svg style="left:2.4px;top:2.8px;width:7.8px;height:6.8px"><use href="#pl" width="7.8" height="6.8"/></svg>
<div class="clipt" style="left:13.6px;top:1.3px;opacity:0.75">Travel</div>
</div>
<div style="left:367.3px;top:457.2px;width:72.4px;height:39.9px;background:#3b4370;overflow:hidden;box-shadow:inset 1px 0 0 #4f59b8,inset 0 -1.2px 0 #4f59b8,inset -0.6px 0 0 #4f59b8;">
<svg style="left:0px;top:0;width:72.4px;height:23.4px"><use href="#blossom" width="72.4" height="23.4"/></svg>
<div style="left:0;top:23.4px;width:72.4px;height:4.6px;background:#454d82"></div>
<div style="left:0;top:28px;width:72.4px;height:0.9px;background:#525bab"></div>
<svg style="left:2.4px;top:2.8px;width:7.8px;height:6.8px"><use href="#pl" width="7.8" height="6.8"/></svg>
<div class="clipt" style="left:13.6px;top:1.3px;opacity:0.7">Cherry Blossom</div>
</div>
<div style="left:439.7px;top:457.2px;width:73.9px;height:40px;background:#3b9b6c;box-shadow:inset 0 0 0 1px #4db581;overflow:hidden">
<svg style="left:2.6px;top:2.6px;width:8px;height:7.2px" viewBox="0 0 8 7.2"><rect width="8" height="7.2" rx="0.6" fill="#f4f5f6"/><path d="M0 2.4H8M3 2.4V7.2" stroke="#3b9b6c" stroke-width="0.9"/></svg>
<div class="clipt" style="left:13.6px;top:1.2px">Split Screen 26</div>
<svg style="left:2px;top:11.6px;width:48.8px;height:26px" viewBox="0 0 48.8 26"><rect width="48.8" height="26" fill="#262c34"/><path d="M0 13H14.5M19.5 0L12.5 26M35.5 0L29.5 26M33 13H48.8" stroke="#3f4650" stroke-width="0.8" fill="none"/><g font-family="Liberation Sans,sans-serif" font-size="6.6" fill="#c5c9ce" text-anchor="middle"><text x="7.6" y="8.8">1</text><text x="7.6" y="22">2</text><text x="24.2" y="15.6">3</text><text x="40.6" y="8.8">4</text><text x="40.6" y="22">5</text></g></svg>
</div>
<div style="left:513.6px;top:457.2px;width:68.4px;height:39.9px;background:#3b4370;overflow:hidden;box-shadow:inset 1px 0 0 #4f59b8,inset 0 -1.2px 0 #4f59b8,inset -0.6px 0 0 #4f59b8;">
<svg style="left:0px;top:0;width:39px;height:23.4px"><use href="#food" width="39" height="23.4"/></svg>
<svg style="left:39px;top:0;width:39px;height:23.4px"><use href="#food" width="39" height="23.4"/></svg>
<div style="left:0;top:23.4px;width:68.4px;height:4.6px;background:#454d82"></div>
<div style="left:0;top:28px;width:68.4px;height:0.9px;background:#525bab"></div>
<svg style="left:2.4px;top:2.8px;width:7.8px;height:6.8px"><use href="#pl" width="7.8" height="6.8"/></svg>
<div class="clipt" style="left:13.6px;top:1.3px;opacity:0.85">Plating Food</div>
</div>
<div style="left:582px;top:457.2px;width:74px;height:39.9px;background:#3b4370;overflow:hidden;box-shadow:inset 1px 0 0 #4f59b8,inset 0 -1.2px 0 #4f59b8,inset -0.6px 0 0 #4f59b8;">
<svg style="left:0px;top:0;width:38.5px;height:23.4px"><use href="#food2" width="38.5" height="23.4"/></svg>
<svg style="left:38.5px;top:0;width:38.5px;height:23.4px"><use href="#food3" width="38.5" height="23.4"/></svg>
<div style="left:0;top:23.4px;width:74px;height:4.6px;background:#454d82"></div>
<div style="left:0;top:28px;width:74px;height:0.9px;background:#525bab"></div>
<svg style="left:2.4px;top:2.8px;width:7.8px;height:6.8px"><use href="#pl" width="7.8" height="6.8"/></svg>
<div class="clipt" style="left:13.6px;top:1.3px;opacity:0.95">Food</div>
</div>
<div style="left:656px;top:457.2px;width:62px;height:39.9px;background:#3b4370;overflow:hidden;box-shadow:inset 1px 0 0 #4f59b8,inset 0 -1.2px 0 #4f59b8,inset -0.6px 0 0 #4f59b8;">
<svg style="left:0px;top:0;width:39px;height:23.4px"><use href="#beach" width="39" height="23.4"/></svg>
<svg style="left:39px;top:0;width:39px;height:23.4px"><use href="#sea" width="39" height="23.4"/></svg>
<div style="left:0;top:23.4px;width:62px;height:4.6px;background:#454d82"></div>
<div style="left:0;top:28px;width:62px;height:0.9px;background:#525bab"></div>
<svg style="left:2.4px;top:2.8px;width:7.8px;height:6.8px"><use href="#pl" width="7.8" height="6.8"/></svg>
<div class="clipt" style="left:13.6px;top:1.3px;opacity:0.8">Beach</div>
</div>
<div style="left:718px;top:457.2px;width:74px;height:39.9px;background:#3b4370;overflow:hidden;box-shadow:inset 1px 0 0 #4f59b8,inset 0 -1.2px 0 #4f59b8,inset -0.6px 0 0 #4f59b8;">
<svg style="left:0px;top:0;width:39px;height:23.4px"><use href="#islands" width="39" height="23.4"/></svg>
<svg style="left:39px;top:0;width:39px;height:23.4px"><use href="#islands" width="39" height="23.4"/></svg>
<div style="left:0;top:23.4px;width:74px;height:4.6px;background:#454d82"></div>
<div style="left:0;top:28px;width:74px;height:0.9px;background:#525bab"></div>
<svg style="left:2.4px;top:2.8px;width:7.8px;height:6.8px"><use href="#pl" width="7.8" height="6.8"/></svg>
<div class="clipt" style="left:13.6px;top:1.3px;opacity:0.75">Islands</div>
</div>
<div style="left:792px;top:457.2px;width:41.2px;height:40px;background:#3b9b6c;box-shadow:inset 0 0 0 1px #4db581;overflow:hidden">
<svg style="left:2.6px;top:2.6px;width:8px;height:7.2px" viewBox="0 0 8 7.2"><rect width="8" height="7.2" rx="0.6" fill="#f4f5f6"/><path d="M0 2.4H8M3 2.4V7.2" stroke="#3b9b6c" stroke-width="0.9"/></svg>
<div class="clipt" style="left:13.6px;top:1.2px">Split Scre</div>
<svg style="left:2px;top:11.6px;width:48.8px;height:26px" viewBox="0 0 48.8 26"><rect width="48.8" height="26" fill="#262c34"/><path d="M12.5 0L18.5 26M27 0L33 26" stroke="#3f4650" stroke-width="0.8" fill="none"/><g font-family="Liberation Sans,sans-serif" font-size="6.6" fill="#c5c9ce" text-anchor="middle"><text x="7.6" y="15.4">1</text><text x="23.6" y="15.4">2</text></g></svg>
</div>
<div style="left:566.8px;top:467.6px;width:29.4px;height:20.2px;border-radius:1px;overflow:hidden;background:#7a6a2c"><div style="left:0;top:0;width:29.4px;height:9px;background:linear-gradient(180deg,#5a4a28,#9a8a34 70%,#b8a83c)"></div><div style="left:0;top:8.8px;width:29.4px;height:9.2px;background:#2bd3f7"></div><div style="left:0;top:18px;width:29.4px;height:1px;background:#c8a428"></div><div style="left:14.9px;top:0;width:0.9px;height:20.2px;background:#20263a"></div></div>
<div style="left:641.6px;top:467.6px;width:28.8px;height:20.2px;border-radius:1px;overflow:hidden;background:#5a5a50"><div style="left:0;top:0;width:14.4px;height:20.2px;background:linear-gradient(180deg,#6a7a80,#4a5a3a)"></div><div style="left:14.4px;top:0;width:14.4px;height:20.2px;background:linear-gradient(180deg,#4a6a80,#7a6a50)"></div><svg style="left:0;top:0;width:28.8px;height:20.2px" viewBox="0 0 28.8 20.2"><rect x="0" y="1.5" width="3.7" height="3.7" fill="#ffb400"/><rect x="0" y="5.1" width="3.7" height="3.7" fill="#ff8a00"/><rect x="3.6" y="5.1" width="3.7" height="3.7" fill="#ffd21a"/><rect x="3.6" y="8.7" width="3.7" height="3.7" fill="#ff6a00"/><rect x="7.2" y="8.7" width="3.7" height="3.7" fill="#ffe24a"/><rect x="7.2" y="12.3" width="3.7" height="3.7" fill="#ffb400"/><rect x="10.8" y="12.3" width="3.7" height="3.7" fill="#ff8a00"/><rect x="10.8" y="15.9" width="3.7" height="3.7" fill="#ffd21a"/><rect x="7.2" y="15.9" width="3.7" height="3.7" fill="#ff6a00"/><rect x="14.4" y="12.3" width="3.7" height="3.7" fill="#ffe24a"/><rect x="18" y="12.3" width="3.7" height="3.7" fill="#ffb400"/><rect x="18" y="8.7" width="3.7" height="3.7" fill="#ff8a00"/><rect x="21.6" y="8.7" width="3.7" height="3.7" fill="#ffd21a"/><rect x="21.6" y="5.1" width="3.7" height="3.7" fill="#ff6a00"/><rect x="25.2" y="5.1" width="3.7" height="3.7" fill="#ffe24a"/><rect x="14.4" y="15.9" width="3.7" height="3.7" fill="#ffb400"/><rect x="18" y="15.9" width="3.7" height="3.7" fill="#ff8a00"/><rect x="0" y="8.7" width="3.7" height="3.7" fill="#ffd21a"/><rect x="25.2" y="8.7" width="3.7" height="3.7" fill="#ff6a00"/><rect x="3.6" y="12.3" width="3.7" height="3.7" fill="#ffe24a"/></svg><div style="left:14.2px;top:0;width:0.9px;height:20.2px;background:#20263a"></div></div>
<div style="left:704px;top:467.6px;width:29px;height:20.2px;border-radius:1px;overflow:hidden;background:#2a2418"><div style="left:0;top:0;width:14px;height:20.2px;background:#3a2a1a"></div><div style="left:14px;top:0;width:15px;height:20.2px;background:linear-gradient(180deg,#3a4a2a,#8a9a4a 50%,#4a4a3a)"></div><svg style="left:0;top:0;width:29px;height:20.2px" viewBox="0 0 29 20.2"><path d="M3 1L12 2L9 18L2 17Z" fill="none" stroke="#f08a10" stroke-width="1.4"/><path d="M13.6 4L5.5 10.2L13.6 16.4" fill="none" stroke="#f4f4f0" stroke-width="1.5"/><path d="M13.8 6.5L8.8 10.2L13.8 14" fill="#d8d4c8"/><path d="M15 3.5L24 10L15 17" fill="none" stroke="#f4f4f0" stroke-width="1.5"/><path d="M16 1L26.5 8.5L18 19" fill="none" stroke="#f4c21a" stroke-width="1.3"/><path d="M24.5 1L27.5 12" stroke="#f08a10" stroke-width="1.4" fill="none"/><path d="M15 16L23 12L25 16L16 19Z" fill="#1a1a14"/></svg><div style="left:13.8px;top:0;width:0.9px;height:20.2px;background:#4f59b8"></div></div>
<div style="left:248.4px;top:497.5px;width:74.4px;height:40.1px;background:#3b4370;overflow:hidden;box-shadow:inset 1px 0 0 #4f59b8,inset 0 -1.2px 0 #4f59b8,inset -0.6px 0 0 #4f59b8;">
<svg style="left:0px;top:0;width:39.6px;height:23.6px"><use href="#islands" width="39.6" height="23.6"/></svg>
<svg style="left:39.6px;top:0;width:39.6px;height:23.6px"><use href="#islands" width="39.6" height="23.6"/></svg>
<div style="left:0;top:23.6px;width:74.4px;height:4.6px;background:#454d82"></div>
<div style="left:0;top:28.2px;width:74.4px;height:0.9px;background:#525bab"></div>
<svg style="left:2.4px;top:2.8px;width:7.8px;height:6.8px"><use href="#pl" width="7.8" height="6.8"/></svg>
<div class="clipt" style="left:13.6px;top:1.3px;opacity:0.7">Islands</div>
</div>
<div style="left:440.3px;top:497.5px;width:61.7px;height:40.1px;background:#3b4370;overflow:hidden;box-shadow:inset 1px 0 0 #4f59b8,inset 0 -1.2px 0 #4f59b8,inset -0.6px 0 0 #4f59b8;">
<svg style="left:0px;top:0;width:39px;height:23.6px"><use href="#beach" width="39" height="23.6"/></svg>
<svg style="left:39px;top:0;width:39px;height:23.6px"><use href="#sea" width="39" height="23.6"/></svg>
<div style="left:0;top:23.6px;width:61.7px;height:4.6px;background:#454d82"></div>
<div style="left:0;top:28.2px;width:61.7px;height:0.9px;background:#525bab"></div>
<svg style="left:2.4px;top:2.8px;width:7.8px;height:6.8px"><use href="#pl" width="7.8" height="6.8"/></svg>
<div class="clipt" style="left:13.6px;top:1.3px;opacity:0.8">Beach</div>
</div>
<div style="left:582.4px;top:497.5px;width:68.1px;height:40.1px;background:#3b4370;overflow:hidden;box-shadow:inset 1px 0 0 #4f59b8,inset 0 -1.2px 0 #4f59b8,inset -0.6px 0 0 #4f59b8;">
<svg style="left:0px;top:0;width:39px;height:23.6px"><use href="#food" width="39" height="23.6"/></svg>
<svg style="left:39px;top:0;width:39px;height:23.6px"><use href="#food" width="39" height="23.6"/></svg>
<div style="left:0;top:23.6px;width:68.1px;height:4.6px;background:#454d82"></div>
<div style="left:0;top:28.2px;width:68.1px;height:0.9px;background:#525bab"></div>
<svg style="left:2.4px;top:2.8px;width:7.8px;height:6.8px"><use href="#pl" width="7.8" height="6.8"/></svg>
<div class="clipt" style="left:13.6px;top:1.3px;opacity:0.85">Plating Food</div>
</div>
<div style="left:192.2px;top:538.2px;width:641px;height:29.5px;background:#27677f;overflow:hidden">
<svg style="left:0;top:0;width:641px;height:30px" viewBox="0 0 641 30" preserveAspectRatio="none"><polygon points="0,30 0,26.2 0.9,26.8 1.8,26.1 2.8,25.6 3.7,26.2 4.8,25.3 5.5,25.2 6.6,26 7.2,26.4 8.4,25.8 9.4,25 10,25.5 10.6,24.9 11.4,24.6 12.3,25.2 13.4,25.2 14.3,25.1 15.3,25 16.1,25.7 17.3,24.5 18.3,22.9 19.1,22.9 19.7,24.3 20.6,24.5 21.4,24.9 22.5,22 23.2,24.7 24.1,24.9 24.9,22.2 25.9,24.3 26.7,22.3 27.5,14.8 28.2,3.5 29.2,11.3 30.1,11.4 30.8,6.4 31.5,11.7 32.6,11.9 33.3,12.3 34.3,11 35,11.7 35.8,3.7 36.8,11.6 37.6,12.5 38.5,13.1 39.2,11.2 40.3,8.9 41.5,11.4 42.6,13.2 43.2,10.7 44,9.6 44.9,8.8 45.6,11.5 46.7,10.3 47.4,6.6 48.1,11.3 49,11.1 50.1,14.9 51.1,3.3 51.8,14.6 52.9,10.6 53.8,11 54.5,13 55.6,13.8 56.7,14.6 57.7,14.6 58.5,14.1 59.5,13.3 60.4,8.1 61.6,14.5 62.5,13.8 63.3,9 64,13.2 64.7,13.6 65.7,3.1 66.4,4.4 67.6,13.5 68.7,12 69.4,12.4 70.6,14.5 71.5,7 72.6,14.3 73.8,6.6 74.6,11.5 75.5,9.7 76.7,3.3 77.9,10.7 78.8,11.9 79.4,11.1 80,4.1 80.7,13.3 81.6,13.4 82.8,6.8 83.5,10.5 84.5,5.8 85.6,12.8 86.6,12.3 87.8,10.9 88.8,11.1 89.8,14.6 90.7,14.5 91.9,12.6 92.6,13.7 93.6,10.2 94.8,14.9 95.9,11.9 97,6.5 97.9,14 98.5,9.4 99.2,12 99.9,11.2 100.9,14.3 102.1,12.7 102.8,11.5 103.5,13.8 104.4,14.3 105.2,12.2 106.4,11.4 107.5,12.9 108.3,12.9 109.2,10.6 110.1,12.3 111.1,12.7 111.7,12.9 112.9,6.8 113.6,12.5 114.7,4.5 115.7,9.2 116.3,8.5 117.1,12.1 117.8,7.1 118.5,11.4 119.4,12.2 120.3,8.1 121.3,12.9 122.2,8.9 123.3,5.5 124.5,11.5 125.6,8.8 126.4,10.9 127.2,6.2 128.2,8.5 129.4,7 130.4,12.8 131.1,3.3 132.1,12.8 132.8,9.7 134,3.5 135.1,12.6 135.9,12.6 136.8,8.6 137.9,11.3 138.9,4.3 139.8,10.6 140.9,13.7 141.9,12.3 142.8,14.9 143.6,14.6 144.6,14.2 145.8,14.5 146.8,13.9 147.8,10.8 148.7,10.5 149.7,10.6 150.7,12 151.7,12.9 152.9,13.4 153.9,7.9 155,11.7 155.6,11.4 156.2,11.6 157.2,12.8 158.1,15 159.2,10.8 160.3,10.7 161,7 161.9,10.8 162.8,12.9 163.6,11.8 164.5,11.8 165.3,3.3 166,13.9 167.1,10.9 168.3,10.8 169.2,12.6 169.9,12.9 170.9,12.6 172,8 172.9,7.2 173.6,12.5 174.5,11.7 175.3,14 176.5,14.8 177.2,11 178.3,13.3 179.1,13.6 180,13.3 180.7,11.6 181.9,3.5 182.7,12.4 183.3,3.7 184.3,13 185.2,5.7 186.2,4 187.3,13.3 188,9.5 188.8,13.4 189.6,13 190.8,12.4 191.4,3.7 192.4,12.7 193.2,4.7 194.2,8.8 195.2,5.9 196.2,8.7 197.1,14.6 198.3,12.5 199.1,11.9 200.2,5.9 201.1,12.1 201.9,11.4 203,12.9 203.9,11.3 205,7.1 206,13.1 207,7.4 208,8.9 209.2,10.9 209.9,13.9 210.6,11.5 211.5,13.9 212.3,14.9 213.2,12.9 214.2,14.6 215.3,13.5 216.4,14.3 217.6,13.4 218.6,14.1 219.5,11.2 220.7,4.6 221.5,11.8 222.2,8.2 223.2,6.7 224.2,3.9 224.9,8.7 225.8,5.2 226.5,7.4 227.6,10.1 228.8,12 230,3.4 231.1,14.1 232,10.9 233,6.8 233.9,14.1 234.8,5.6 235.6,14.4 236.6,7.3 237.2,9.6 238.4,5.2 239.4,10.9 240.3,14.8 241.4,11.9 242.2,9.6 243,12.9 243.7,5.5 244.3,11.9 245.3,12.1 246,12.3 247.2,14.2 247.8,12.2 248.5,13 249.1,15 249.9,6 250.8,11.8 251.6,4.6 252.6,12 253.6,13.8 254.7,3.8 255.7,6.2 256.8,4.8 257.5,11.1 258.1,14.6 259,13.4 260.1,12.2 261,10.6 262,14.9 263,5.6 263.8,6 264.7,14 265.7,11.2 266.8,13 267.7,11.1 268.9,12.8 270,11.4 271,5 271.9,10.4 272.7,10.8 273.4,14.6 274.4,10.3 275.6,14.2 276.2,10.2 277,13.1 277.7,3.3 278.4,14.9 279.4,11.9 280.4,12.2 281.5,6.7 282.2,12.2 282.9,7.5 283.7,8.4 284.4,14.8 285.3,12.4 286.3,13.9 287.2,15 288.3,12.3 289.2,14.6 290.1,12.4 290.9,10.7 292.1,13.8 293.1,11.9 293.8,11.1 294.7,8.6 295.6,6.2 296.3,10.8 297.5,13.5 298.4,9 299.3,9.3 300,12.9 300.6,5.6 301.2,14.5 302.1,12.1 302.7,10.6 303.5,12.7 304.7,5.4 305.8,9.7 306.6,10 307.8,11.4 308.5,3.8 309.6,11.9 310.7,8.6 311.8,4.8 312.6,4.4 313.4,13.5 314.2,13.5 315.2,10.4 316.2,11.7 316.8,14.9 317.7,7.8 318.5,11.6 319.1,11.8 319.9,11.8 320.6,14.5 321.2,12.6 322.1,14.7 322.8,13 323.6,13.5 324.5,12.8 325.5,12.8 326.2,7.9 326.9,12.5 328,6.9 328.8,13.1 329.4,13.2 330.3,4.2 330.9,12.7 331.8,11.7 332.4,14.6 333.4,4.2 334.1,8 335.1,11.7 335.7,5 336.4,13.6 337.5,10.8 338.3,11.5 338.9,12.7 340.1,11.2 341.2,10.1 341.9,6.4 342.5,10.7 343.6,5 344.5,11.6 345.6,12.1 346.8,6.2 347.8,10.8 348.8,14.4 350,12.6 351.1,12.2 351.8,7.4 352.5,6.7 353.3,12.5 354.3,6.1 354.9,13.6 355.7,5.1 356.5,14.7 357.3,10.5 358.1,13.9 359.3,6.1 359.9,9.2 360.8,10.7 361.6,7.8 362.2,11.9 363.1,11.1 363.9,13.8 364.6,8.7 365.4,12.2 366.1,11.8 366.9,8 367.8,14.1 368.6,13.5 369.3,13.6 370.5,8.1 371.1,12.4 371.8,7 372.5,11.2 373.4,11.3 374.2,10.9 375,11.2 376.1,13 376.7,12.3 377.3,7 378.3,5 378.9,12.1 379.8,11.7 380.5,12.6 381.7,12.1 382.9,14 383.8,12.3 384.6,14.2 385.4,4.1 386.3,11.9 387.5,4.8 388.5,7.4 389.4,11.6 390.3,13 391.3,14.2 392.1,12.1 392.9,13.7 393.9,14.8 394.6,13.3 395.5,9 396.4,5.6 397.1,3.5 397.8,11 398.5,12.5 399.3,11.2 400.5,7.1 401.5,12.3 402.3,5.7 403.4,14.3 404.3,12.4 405.3,14.2 405.9,12.2 406.7,7.7 407.8,8.5 408.7,13.3 409.9,8.7 410.5,8.8 411.7,11 412.3,12.9 413.2,11.9 414.3,11.8 415.2,13.9 416.1,13.6 417.1,3.9 418.3,11.6 419,7.5 419.7,4.8 420.6,3.4 421.2,3.6 421.9,12.7 422.6,14.4 423.5,14.1 424.1,13 425.1,11.7 426.2,15 427.3,3.2 428,5.9 429.1,11.9 429.7,11.4 430.3,12.9 431.3,13.8 432.4,14.2 433.6,11 434.5,10.3 435.1,6.1 435.9,13.5 436.7,13.4 437.5,3.8 438.3,8.9 439.2,3.8 439.9,12.1 440.5,12.8 441.3,12.9 442,9 442.7,14.9 443.9,11.5 444.9,8.4 446.1,5.9 447.2,11.2 448.1,7.9 449.2,14.4 450.1,9.7 451.1,12.5 452,7.8 452.9,8 453.8,13.2 454.9,11.2 456.1,8.9 457.3,12.3 458,15 458.7,14.3 459.9,14.2 460.8,10 461.8,11.6 462.7,12.9 463.4,11.8 464.1,13 465,11.6 466.1,14 467.2,5.9 467.9,10.7 469,4.5 469.8,14.3 471,10.8 471.7,13.3 472.7,11.4 473.6,10.6 474.4,7.8 475.4,8.6 476.3,10.5 477.3,11 478.3,13.8 479.1,8 479.9,14.2 480.8,12.8 481.6,7.6 482.4,9.8 483.4,12.5 484.2,13.8 485.1,10.8 485.8,12.5 486.6,13.6 487.4,10.2 488.1,12.4 489.2,14.3 490.1,10.9 490.8,12.1 491.8,13.5 493,8.1 493.8,12.1 494.6,13.5 495.8,14.9 496.7,14.2 497.7,6.7 498.5,10.9 499.2,6.2 500.3,8.2 501.3,9.5 502.3,6.7 502.9,14.4 504,10.6 505,9.3 505.7,7.5 506.4,10.9 507.2,6.3 507.8,11.5 508.8,12.6 509.4,10.8 510.3,12.3 511.5,14.8 512.1,11.2 513.1,7.2 513.7,10.7 514.7,6.3 515.4,10.4 516.2,12.7 517.3,14.8 518.2,14.6 519,5.9 519.8,12.6 520.7,9.7 521.3,12.9 522.2,6 522.9,9 523.8,10.5 525,10.5 526.2,12.1 527,11.9 528,11.9 528.9,3.7 529.6,11.7 530.5,14.4 531.3,10.9 532.4,9.6 533.4,9.1 534.1,13.3 535.2,10.5 536.3,8.9 537.1,13.6 538.3,10.8 539.1,13.9 540,5.6 541,9.7 542,3.9 542.8,14.8 544,11.5 544.9,10 545.8,10.6 546.6,13.5 547.5,13.6 548.6,11 549.3,5.8 550,12.1 550.9,12.2 552,12.1 552.9,8.6 553.6,11.7 554.6,9.6 555.4,13.7 556.4,13 557.5,12.6 558.2,5.5 559.4,10.7 560.3,13 561,14.8 562.1,10.9 562.8,11.4 563.8,11 564.7,14.5 565.7,12.1 566.8,11.8 567.8,3.2 568.7,5 569.4,5.3 570.2,12.8 570.9,14.4 571.8,12.9 572.8,13.5 573.8,10.5 574.6,6.6 575.5,13.8 576.4,13 577.1,10.5 578.1,10.8 578.8,10.9 579.5,8.3 580.2,10.6 581.4,13.6 582.4,7.2 583.2,12.9 584.1,11.4 584.9,6.9 585.8,14.9 586.5,11.9 587.5,14.7 588.7,14.7 589.9,10.6 590.8,13.6 591.8,7.2 593,10 594.1,9.6 595.2,12.8 596.2,3.5 597.3,14.9 598.1,12 598.7,7.7 599.7,12 600.5,11.6 601.2,6.8 602.3,8.2 603.1,10 603.8,5.6 604.8,13.5 605.7,10.9 606.5,11.5 607.7,12.2 608.8,15 609.5,14.1 610.3,14.1 611.1,13.2 612,7 612.8,10.8 613.5,11.4 614.6,14.7 615.8,11.1 617,8.4 618.1,13.8 619,5.2 620.1,5.8 620.8,4 621.7,12.9 622.7,12.9 623.4,5.5 624.4,14.7 625.1,12 625.9,14.1 626.8,13.2 627.7,11.4 628.9,10.6 629.7,4.4 630.7,4.8 631.8,12.7 632.7,5.4 633.3,11.7 634.2,12.6 634.9,12.1 635.9,12.4 636.8,12 637.5,14.7 638.6,11.2 639.8,8.8 640.6,10.6 640.6,30" fill="#2b958d"/></svg>
<div style="left:0;top:0;width:645px;height:29.5px;box-shadow:inset 0 0 0 1.1px #2cc4e6"></div>
<svg style="left:2.4px;top:2.8px;width:7.8px;height:7.4px" viewBox="0 0 7.8 7.4"><rect width="7.8" height="7.4" rx="0.7" fill="#f4f5f6"/><path d="M3 5.2V2.2L5.8 1.6V4.6" stroke="#14181c" stroke-width="0.7" fill="none"/><circle cx="2.4" cy="5.3" r="0.8" fill="#14181c"/><circle cx="5.2" cy="4.7" r="0.8" fill="#14181c"/></svg>
<div class="clipt" style="left:13.4px;top:1.6px">Around The Corner</div>
</div>
<div style="left:252.5px;top:427px;width:0.9px;height:163.5px;background:#bd5242"></div>
<svg style="left:249.2px;top:422.2px;width:7.6px;height:7.4px" viewBox="0 0 7.6 7.4"><path d="M0.2 1.4Q0.2 0.2 1.4 0.2H6.2Q7.4 0.2 7.4 1.4V4L3.8 7.2L0.2 4Z" fill="#f0614c"/></svg>
<div style="left:246.9px;top:496.3px;width:12.4px;height:19.6px;border-radius:6.2px;background:#f0614c"></div>
<svg class="ico" style="left:248.4px;top:500px;width:9.4px;height:12px;stroke:#fff;stroke-width:0.8" viewBox="0 0 9.4 12"><circle cx="2.3" cy="9.2" r="1.6"/><circle cx="7.1" cy="9.2" r="1.6"/><path d="M3 7.8L6.4 1M6.4 7.8L3 1"/></svg>
<div style="left:146.6px;top:591.2px;width:140.6px;height:4.6px;border-radius:2.3px;background:#8b8f95"></div>
<div style="left:835.2px;top:424.6px;width:4.4px;height:158px;border-radius:2.2px;background:#8b8f95"></div>
<div style="left:774px;top:584.6px;font-size:7.8px;font-weight:bold;color:#84888f;line-height:10px">© FileInfo.com</div>
</div></div>
</body>
</html>
